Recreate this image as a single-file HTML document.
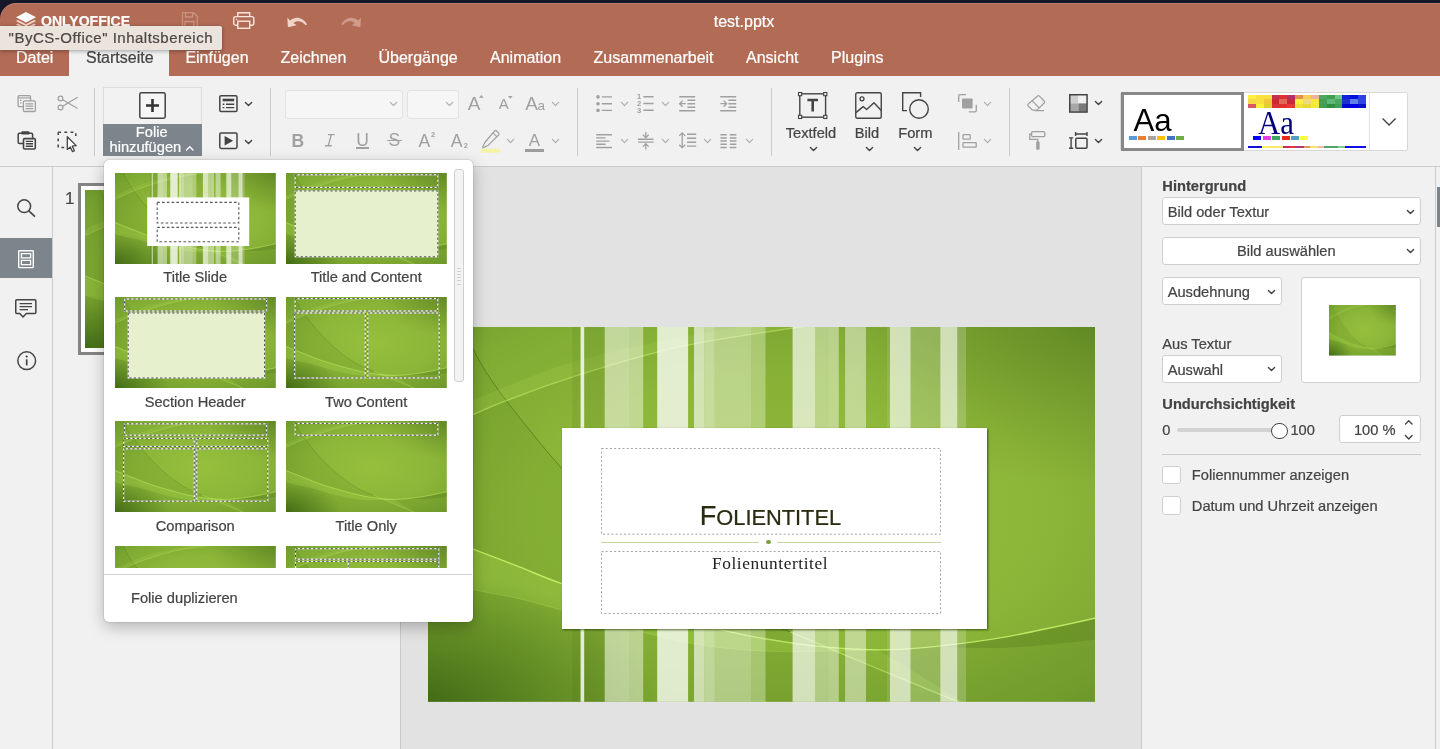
<!DOCTYPE html>
<html><head><meta charset="utf-8"><title>test.pptx</title>
<style>
html,body{margin:0;padding:0}
body{will-change:transform;width:1440px;height:749px;overflow:hidden;position:relative;background:#f1f1f1;font-family:"Liberation Sans",sans-serif;font-size:14.67px;color:#444}
.t{position:absolute;white-space:nowrap;-webkit-text-stroke:0.22px currentColor}
</style></head><body>
<div style="position:absolute;left:0px;top:0px;width:1440px;height:3px;background:#17172b"></div>
<div style="position:absolute;left:0px;top:0px;width:40px;height:40px;background:#17172b"></div>
<div style="position:absolute;left:0px;top:2.5px;width:1440px;height:73.5px;background:#b26b55;border-top-left-radius:16px;box-shadow:inset 0 1px 0 rgba(255,255,255,0.13)"></div>
<div style="position:absolute;left:69.2px;top:43px;width:99.6px;height:34px;background:#f1f1f1"></div>
<svg style="position:absolute;left:16px;top:12px;width:20px;height:18px;overflow:visible;" viewBox="0 0 20 18"><path d="M10,0 L20,5.2 L10,10.4 L0,5.2 Z" fill="#fff"/><path d="M1.8,8 L10,12.2 L18.2,8 L20,9.1 L10,14.3 L0,9.1 Z" fill="#f7d9cf"/><path d="M1.8,11.6 L10,15.8 L18.2,11.6 L20,12.7 L10,17.9 L0,12.7 Z" fill="#efc4b6"/></svg>
<div class="t" style="left:41px;top:12px;color:#fff;font-weight:bold;font-size:15px;line-height:18px;transform:scaleX(0.935);transform-origin:0 0">ONLYOFFICE</div>
<div class="t" style="left:0px;top:11.8px;color:#fff;font-size:16px;line-height:20px;width:1488px;text-align:center">test.pptx</div>
<svg style="position:absolute;left:181px;top:12px;width:17px;height:17px;overflow:visible;opacity:0.32" viewBox="0 0 17 17"><path d="M1.5,0.7 H12.5 L16.3,4.5 V16.3 H1.5 Z M4.5,0.7 V5 H11.5 V0.7 M4,16.3 V9.5 H13 V16.3" fill="none" stroke="#fbe6df" stroke-width="1.3"/></svg>
<svg style="position:absolute;left:232.5px;top:12px;width:21.5px;height:17px;overflow:visible;" viewBox="0 0 21.5 17"><path d="M4.8,4.6 V0.7 H16.7 V4.6" fill="none" stroke="#fbe6df" stroke-width="1.4"/><rect x="0.7" y="4.6" width="20.1" height="8.6" rx="2" fill="none" stroke="#fbe6df" stroke-width="1.4"/><rect x="4.8" y="9.2" width="11.9" height="7.1" fill="#b26b55" stroke="#fbe6df" stroke-width="1.4"/><circle cx="3.6" cy="7.3" r="0.8" fill="#fbe6df"/></svg>
<svg style="position:absolute;left:286.7px;top:17px;width:20.3px;height:10.4px;overflow:visible;opacity:0.85" viewBox="0 0 20.3 10.4"><path d="M0.3,0.8 L0.9,10.2 L9.6,8.2 L6.4,5.9 C10,3.2 15,3.6 18.6,8.2 L20,7.4 C16.2,0.6 8.6,-1.4 3.2,3.6 Z" fill="#fbe6df"/></svg>
<svg style="position:absolute;left:340.6px;top:17px;width:20.3px;height:10.4px;overflow:visible;opacity:0.4" viewBox="0 0 20.3 10.4"><path transform="translate(20.3 0) scale(-1 1)" d="M0.3,0.8 L0.9,10.2 L9.6,8.2 L6.4,5.9 C10,3.2 15,3.6 18.6,8.2 L20,7.4 C16.2,0.6 8.6,-1.4 3.2,3.6 Z" fill="#fbe6df"/></svg>
<div class="t" style="left:16px;top:48.1px;color:#fff;font-size:16px;line-height:20px">Datei</div>
<div class="t" style="left:86px;top:48.1px;color:#444;font-size:16px;line-height:20px">Startseite</div>
<div class="t" style="left:185.4px;top:48.1px;color:#fff;font-size:16px;line-height:20px">Einfügen</div>
<div class="t" style="left:280.5px;top:48.1px;color:#fff;font-size:16px;line-height:20px">Zeichnen</div>
<div class="t" style="left:378.5px;top:48.1px;color:#fff;font-size:16px;line-height:20px">Übergänge</div>
<div class="t" style="left:490px;top:48.1px;color:#fff;font-size:16px;line-height:20px">Animation</div>
<div class="t" style="left:593.5px;top:48.1px;color:#fff;font-size:16px;line-height:20px">Zusammenarbeit</div>
<div class="t" style="left:746px;top:48.1px;color:#fff;font-size:16px;line-height:20px">Ansicht</div>
<div class="t" style="left:831px;top:48.1px;color:#fff;font-size:16px;line-height:20px">Plugins</div>
<div style="position:absolute;left:0px;top:25.8px;width:221.7px;height:24.4px;background:#ebe4dc;box-shadow:0 1px 4px rgba(0,0,0,0.35);border-radius:0 2px 2px 0"></div>
<div class="t" style="left:8.6px;top:29.1px;color:#4b4845;font-size:15px;line-height:18px;letter-spacing:0.5px">&quot;ByCS-Office&quot; Inhaltsbereich</div>
<div style="position:absolute;left:0px;top:166px;width:1440px;height:1px;background:#cbcbcb"></div>
<div style="position:absolute;left:93.5px;top:88px;width:1px;height:68px;background:#cbcbcb"></div>
<div style="position:absolute;left:269.9px;top:88px;width:1px;height:68px;background:#cbcbcb"></div>
<div style="position:absolute;left:576.5px;top:88px;width:1px;height:68px;background:#cbcbcb"></div>
<div style="position:absolute;left:770.5px;top:88px;width:1px;height:68px;background:#cbcbcb"></div>
<div style="position:absolute;left:1008.9px;top:88px;width:1px;height:68px;background:#cbcbcb"></div>
<div style="position:absolute;left:52px;top:167px;width:1px;height:600px;background:#cbcbcb"></div>
<div style="position:absolute;left:0px;top:238px;width:52px;height:40px;background:#7d858c"></div>
<div style="position:absolute;left:401px;top:167px;width:740.5px;height:600px;background:#e2e2e2"></div>
<div style="position:absolute;left:400.3px;top:167px;width:1px;height:600px;background:#cbcbcb"></div>
<div style="position:absolute;left:1141px;top:167px;width:1px;height:600px;background:#cbcbcb"></div>
<div style="position:absolute;left:1435px;top:167px;width:1px;height:600px;background:#cbcbcb"></div>
<div style="position:absolute;left:1436.5px;top:187px;width:4px;height:40px;background:#7d858c"></div>
<div class="t" style="left:65px;top:189px;color:#444;font-size:17px;line-height:20px">1</div>
<div style="position:absolute;left:78px;top:183px;width:296px;height:171.5px;border:3.5px solid #848484;background:#fff;box-sizing:border-box"></div>
<svg style="position:absolute;left:84.7px;top:190px;width:282px;height:158px" viewBox="0 0 667 375" preserveAspectRatio="none">
<defs><radialGradient id="gg0" cx="54%" cy="50%" r="85%">
<stop offset="0" stop-color="#95bf3c"/><stop offset="0.45" stop-color="#8cb638"/><stop offset="0.75" stop-color="#7aa530"/><stop offset="1" stop-color="#5d8a24"/></radialGradient>
<radialGradient id="gd0" cx="0%" cy="100%" r="34%"><stop offset="0" stop-color="rgba(30,70,5,0.5)"/><stop offset="1" stop-color="rgba(30,70,5,0)"/></radialGradient>
<radialGradient id="gt0" cx="100%" cy="0%" r="42%"><stop offset="0" stop-color="rgba(40,70,10,0.26)"/><stop offset="1" stop-color="rgba(40,70,10,0)"/></radialGradient>
</defs>
<rect width="667" height="375" fill="url(#gg0)"/>
<path d="M30,-12 C30.8,-10.0 30.8,-8.7 35.0,0.0 C39.2,8.7 45.7,25.0 55.0,40.0 C64.3,55.0 75.0,70.0 91.0,90.0 C107.0,110.0 128.3,136.7 151.0,160.0 C173.7,183.3 201.8,210.0 227.0,230.0 C252.2,250.0 279.5,267.5 302.0,280.0 C324.5,292.5 338.2,295.0 362.0,305.0 C385.8,315.0 417.0,328.3 445.0,340.0 C473.0,351.7 513.3,368.2 530.0,375.0 C546.7,381.8 542.5,380.0 545.0,381.0 L-10,381 L-10,-12 Z" fill="rgba(50,90,10,0.085)"/>
<path d="M-10,113 C-8.3,112.2 -14.2,114.3 0.0,108.0 C14.2,101.7 49.8,85.0 75.0,75.0 C100.2,65.0 121.7,57.2 151.0,48.0 C180.3,38.8 217.5,27.5 251.0,20.0 C284.5,12.5 330.5,6.5 352.0,3.0 C373.5,-0.5 375.3,-0.3 380.0,-1.0 L-10,-12 Z" fill="rgba(190,235,100,0.07)"/>
<path d="M450,323 C458.9,322.5 482.4,322.2 503.7,320.0 C525.0,317.8 550.8,314.8 578.0,310.0 C605.2,305.2 650.0,295.1 667.0,291.4 C684.0,287.7 677.8,288.6 680.0,288.0 L680,381 L545,381 Z" fill="rgba(40,80,10,0.10)"/>
<path d="M-10,200 C-8.3,200.7 -9.1,200.3 0.0,204.0 C9.1,207.7 29.7,216.2 44.5,222.0 C59.3,227.8 74.2,233.2 89.0,239.0 C103.8,244.8 114.3,250.0 133.0,256.5 C151.7,263.0 172.8,269.9 201.0,278.0 C229.2,286.1 272.5,298.3 302.0,305.0 C331.5,311.7 353.3,315.0 378.0,318.0 C402.7,321.0 438.0,322.2 450.0,323.0 L450,323 C434.2,323.3 383.2,325.4 355.0,324.8 C326.8,324.2 303.6,322.4 280.7,319.3 C257.8,316.2 242.1,312.1 217.5,306.0 C192.9,299.9 154.4,288.8 133.0,283.0 C111.6,277.2 103.8,274.8 89.0,271.4 C74.2,268.0 59.3,266.1 44.5,262.5 C29.7,258.9 9.1,252.6 0.0,250.0 C-9.1,247.4 -8.3,247.5 -10.0,247.0 Z" fill="rgba(190,240,90,0.20)"/>
<rect width="667" height="375" fill="url(#gd0)"/>
<rect width="667" height="375" fill="url(#gt0)"/>
<path d="M30,-12 C30.8,-10.0 30.8,-8.7 35.0,0.0 C39.2,8.7 45.7,25.0 55.0,40.0 C64.3,55.0 75.0,70.0 91.0,90.0 C107.0,110.0 128.3,136.7 151.0,160.0 C173.7,183.3 201.8,210.0 227.0,230.0 C252.2,250.0 279.5,267.5 302.0,280.0 C324.5,292.5 352.0,300.8 362.0,305.0" stroke="rgba(55,95,15,0.5)" stroke-width="1.0" fill="none"/>
<path d="M362,305 C375.8,310.8 417.0,328.3 445.0,340.0 C473.0,351.7 513.3,368.2 530.0,375.0 C546.7,381.8 542.5,380.0 545.0,381.0" stroke="rgba(205,248,120,0.55)" stroke-width="1.2" fill="none"/>
<path d="M503.7,320 C516.1,318.3 550.8,314.8 578.0,310.0 C605.2,305.2 650.0,295.1 667.0,291.4 C684.0,287.7 677.8,288.6 680.0,288.0 L680,312 C677.8,312.2 677.0,312.0 667.0,313.0 C657.0,314.0 634.8,316.7 620.0,318.0 C605.2,319.3 591.3,320.5 578.0,321.0 C564.7,321.5 552.4,321.2 540.0,321.0 C527.6,320.8 509.8,320.2 503.7,320.0 Z" fill="rgba(40,70,10,0.14)"/>
<path d="M-10,113 C-8.3,112.2 -14.2,114.3 0.0,108.0 C14.2,101.7 49.8,85.0 75.0,75.0 C100.2,65.0 121.7,57.2 151.0,48.0 C180.3,38.8 217.5,27.5 251.0,20.0 C284.5,12.5 330.5,6.5 352.0,3.0 C373.5,-0.5 375.3,-0.3 380.0,-1.0 L384,-11 C379.3,-10.3 377.5,-10.5 356.0,-7.0 C334.5,-3.5 288.5,3.5 255.0,10.0 C221.5,16.5 184.3,23.8 155.0,32.0 C125.7,40.2 104.2,49.0 79.0,59.0 C53.8,69.0 18.2,85.7 4.0,92.0 C-10.2,98.3 -4.3,96.2 -6.0,97.0 Z" fill="rgba(205,245,110,0.10)"/>
<path d="M-10,113 C-8.3,112.2 -14.2,114.3 0.0,108.0 C14.2,101.7 49.8,85.0 75.0,75.0 C100.2,65.0 121.7,57.2 151.0,48.0 C180.3,38.8 217.5,27.5 251.0,20.0 C284.5,12.5 330.5,6.5 352.0,3.0 C373.5,-0.5 375.3,-0.3 380.0,-1.0" stroke="rgba(205,245,110,0.5)" stroke-width="1.3" fill="none"/>
<path d="M-10,247 C-8.3,247.5 -9.1,247.4 0.0,250.0 C9.1,252.6 29.7,258.9 44.5,262.5 C59.3,266.1 74.2,268.0 89.0,271.4 C103.8,274.8 111.6,277.2 133.0,283.0 C154.4,288.8 192.9,299.9 217.5,306.0 C242.1,312.1 257.8,316.2 280.7,319.3 C303.6,322.4 326.8,324.2 355.0,324.8 C383.2,325.4 434.2,323.3 450.0,323.0" stroke="rgba(200,245,110,0.22)" stroke-width="1.0" fill="none"/>
<path d="M-10,200 C-8.3,200.7 -9.1,200.3 0.0,204.0 C9.1,207.7 29.7,216.2 44.5,222.0 C59.3,227.8 74.2,233.2 89.0,239.0 C103.8,244.8 114.3,250.0 133.0,256.5 C151.7,263.0 172.8,269.9 201.0,278.0 C229.2,286.1 272.5,298.3 302.0,305.0 C331.5,311.7 353.3,315.0 378.0,318.0 C402.7,321.0 429.1,322.7 450.0,323.0 C470.9,323.3 482.4,322.2 503.7,320.0 C525.0,317.8 550.8,314.8 578.0,310.0 C605.2,305.2 650.0,295.1 667.0,291.4 C684.0,287.7 677.8,288.6 680.0,288.0" stroke="rgba(205,248,110,0.8)" stroke-width="1.4" fill="none"/>
<rect x="144.2" y="0" width="8.2" height="375" fill="rgba(0,0,0,0.05)"/><rect x="152.6" y="0" width="3.6" height="375" fill="rgba(255,255,255,0.8)"/><rect x="156.2" y="0" width="20.5" height="375" fill="rgba(0,0,0,0.05)"/><rect x="176.7" y="0" width="25.1" height="375" fill="rgba(255,255,255,0.5)"/><rect x="201.8" y="0" width="13.4" height="375" fill="rgba(255,255,255,0.45)"/><rect x="229.2" y="0" width="30.9" height="375" fill="rgba(255,255,255,0.76)"/><rect x="266" y="0" width="10.1" height="375" fill="rgba(255,255,255,0.62)"/><rect x="276.1" y="0" width="10.7" height="375" fill="rgba(255,255,255,0.5)"/><rect x="286.8" y="0" width="36.2" height="375" fill="rgba(255,255,255,0.4)"/><rect x="323" y="0" width="14.5" height="375" fill="rgba(255,255,255,0.3)"/><rect x="337.5" y="0" width="27.1" height="375" fill="rgba(0,0,0,0.03)"/><rect x="364.6" y="0" width="22.6" height="375" fill="rgba(255,255,255,0.66)"/><rect x="387.2" y="0" width="12.2" height="375" fill="rgba(255,255,255,0.4)"/><rect x="399.4" y="0" width="11.4" height="375" fill="rgba(255,255,255,0.43)"/><rect x="417.1" y="0" width="20.9" height="375" fill="rgba(255,255,255,0.45)"/><rect x="459" y="0" width="3" height="375" fill="rgba(255,255,255,0.1)"/><rect x="462" y="0" width="20.6" height="375" fill="rgba(255,255,255,0.66)"/><rect x="482.6" y="0" width="29.7" height="375" fill="rgba(255,255,255,0.2)"/><rect x="512.3" y="0" width="17.0" height="375" fill="rgba(255,255,255,0.66)"/><rect x="529.3" y="0" width="8.8" height="375" fill="rgba(255,255,255,0.2)"/><rect x="133.6" y="101" width="425.6" height="200.6" fill="#fff"/></svg>
<svg style="position:absolute;left:428px;top:327.2px;width:667px;height:374.8px" viewBox="0 0 667 375" preserveAspectRatio="none">
<defs><radialGradient id="gg1" cx="54%" cy="50%" r="85%">
<stop offset="0" stop-color="#95bf3c"/><stop offset="0.45" stop-color="#8cb638"/><stop offset="0.75" stop-color="#7aa530"/><stop offset="1" stop-color="#5d8a24"/></radialGradient>
<radialGradient id="gd1" cx="0%" cy="100%" r="34%"><stop offset="0" stop-color="rgba(30,70,5,0.5)"/><stop offset="1" stop-color="rgba(30,70,5,0)"/></radialGradient>
<radialGradient id="gt1" cx="100%" cy="0%" r="42%"><stop offset="0" stop-color="rgba(40,70,10,0.26)"/><stop offset="1" stop-color="rgba(40,70,10,0)"/></radialGradient>
</defs>
<rect width="667" height="375" fill="url(#gg1)"/>
<path d="M30,-12 C30.8,-10.0 30.8,-8.7 35.0,0.0 C39.2,8.7 45.7,25.0 55.0,40.0 C64.3,55.0 75.0,70.0 91.0,90.0 C107.0,110.0 128.3,136.7 151.0,160.0 C173.7,183.3 201.8,210.0 227.0,230.0 C252.2,250.0 279.5,267.5 302.0,280.0 C324.5,292.5 338.2,295.0 362.0,305.0 C385.8,315.0 417.0,328.3 445.0,340.0 C473.0,351.7 513.3,368.2 530.0,375.0 C546.7,381.8 542.5,380.0 545.0,381.0 L-10,381 L-10,-12 Z" fill="rgba(50,90,10,0.085)"/>
<path d="M-10,113 C-8.3,112.2 -14.2,114.3 0.0,108.0 C14.2,101.7 49.8,85.0 75.0,75.0 C100.2,65.0 121.7,57.2 151.0,48.0 C180.3,38.8 217.5,27.5 251.0,20.0 C284.5,12.5 330.5,6.5 352.0,3.0 C373.5,-0.5 375.3,-0.3 380.0,-1.0 L-10,-12 Z" fill="rgba(190,235,100,0.07)"/>
<path d="M450,323 C458.9,322.5 482.4,322.2 503.7,320.0 C525.0,317.8 550.8,314.8 578.0,310.0 C605.2,305.2 650.0,295.1 667.0,291.4 C684.0,287.7 677.8,288.6 680.0,288.0 L680,381 L545,381 Z" fill="rgba(40,80,10,0.10)"/>
<path d="M-10,200 C-8.3,200.7 -9.1,200.3 0.0,204.0 C9.1,207.7 29.7,216.2 44.5,222.0 C59.3,227.8 74.2,233.2 89.0,239.0 C103.8,244.8 114.3,250.0 133.0,256.5 C151.7,263.0 172.8,269.9 201.0,278.0 C229.2,286.1 272.5,298.3 302.0,305.0 C331.5,311.7 353.3,315.0 378.0,318.0 C402.7,321.0 438.0,322.2 450.0,323.0 L450,323 C434.2,323.3 383.2,325.4 355.0,324.8 C326.8,324.2 303.6,322.4 280.7,319.3 C257.8,316.2 242.1,312.1 217.5,306.0 C192.9,299.9 154.4,288.8 133.0,283.0 C111.6,277.2 103.8,274.8 89.0,271.4 C74.2,268.0 59.3,266.1 44.5,262.5 C29.7,258.9 9.1,252.6 0.0,250.0 C-9.1,247.4 -8.3,247.5 -10.0,247.0 Z" fill="rgba(190,240,90,0.20)"/>
<rect width="667" height="375" fill="url(#gd1)"/>
<rect width="667" height="375" fill="url(#gt1)"/>
<path d="M30,-12 C30.8,-10.0 30.8,-8.7 35.0,0.0 C39.2,8.7 45.7,25.0 55.0,40.0 C64.3,55.0 75.0,70.0 91.0,90.0 C107.0,110.0 128.3,136.7 151.0,160.0 C173.7,183.3 201.8,210.0 227.0,230.0 C252.2,250.0 279.5,267.5 302.0,280.0 C324.5,292.5 352.0,300.8 362.0,305.0" stroke="rgba(55,95,15,0.5)" stroke-width="1.0" fill="none"/>
<path d="M362,305 C375.8,310.8 417.0,328.3 445.0,340.0 C473.0,351.7 513.3,368.2 530.0,375.0 C546.7,381.8 542.5,380.0 545.0,381.0" stroke="rgba(205,248,120,0.55)" stroke-width="1.2" fill="none"/>
<path d="M503.7,320 C516.1,318.3 550.8,314.8 578.0,310.0 C605.2,305.2 650.0,295.1 667.0,291.4 C684.0,287.7 677.8,288.6 680.0,288.0 L680,312 C677.8,312.2 677.0,312.0 667.0,313.0 C657.0,314.0 634.8,316.7 620.0,318.0 C605.2,319.3 591.3,320.5 578.0,321.0 C564.7,321.5 552.4,321.2 540.0,321.0 C527.6,320.8 509.8,320.2 503.7,320.0 Z" fill="rgba(40,70,10,0.14)"/>
<path d="M-10,113 C-8.3,112.2 -14.2,114.3 0.0,108.0 C14.2,101.7 49.8,85.0 75.0,75.0 C100.2,65.0 121.7,57.2 151.0,48.0 C180.3,38.8 217.5,27.5 251.0,20.0 C284.5,12.5 330.5,6.5 352.0,3.0 C373.5,-0.5 375.3,-0.3 380.0,-1.0 L384,-11 C379.3,-10.3 377.5,-10.5 356.0,-7.0 C334.5,-3.5 288.5,3.5 255.0,10.0 C221.5,16.5 184.3,23.8 155.0,32.0 C125.7,40.2 104.2,49.0 79.0,59.0 C53.8,69.0 18.2,85.7 4.0,92.0 C-10.2,98.3 -4.3,96.2 -6.0,97.0 Z" fill="rgba(205,245,110,0.10)"/>
<path d="M-10,113 C-8.3,112.2 -14.2,114.3 0.0,108.0 C14.2,101.7 49.8,85.0 75.0,75.0 C100.2,65.0 121.7,57.2 151.0,48.0 C180.3,38.8 217.5,27.5 251.0,20.0 C284.5,12.5 330.5,6.5 352.0,3.0 C373.5,-0.5 375.3,-0.3 380.0,-1.0" stroke="rgba(205,245,110,0.5)" stroke-width="1.3" fill="none"/>
<path d="M-10,247 C-8.3,247.5 -9.1,247.4 0.0,250.0 C9.1,252.6 29.7,258.9 44.5,262.5 C59.3,266.1 74.2,268.0 89.0,271.4 C103.8,274.8 111.6,277.2 133.0,283.0 C154.4,288.8 192.9,299.9 217.5,306.0 C242.1,312.1 257.8,316.2 280.7,319.3 C303.6,322.4 326.8,324.2 355.0,324.8 C383.2,325.4 434.2,323.3 450.0,323.0" stroke="rgba(200,245,110,0.22)" stroke-width="1.0" fill="none"/>
<path d="M-10,200 C-8.3,200.7 -9.1,200.3 0.0,204.0 C9.1,207.7 29.7,216.2 44.5,222.0 C59.3,227.8 74.2,233.2 89.0,239.0 C103.8,244.8 114.3,250.0 133.0,256.5 C151.7,263.0 172.8,269.9 201.0,278.0 C229.2,286.1 272.5,298.3 302.0,305.0 C331.5,311.7 353.3,315.0 378.0,318.0 C402.7,321.0 429.1,322.7 450.0,323.0 C470.9,323.3 482.4,322.2 503.7,320.0 C525.0,317.8 550.8,314.8 578.0,310.0 C605.2,305.2 650.0,295.1 667.0,291.4 C684.0,287.7 677.8,288.6 680.0,288.0" stroke="rgba(205,248,110,0.8)" stroke-width="1.4" fill="none"/>
<rect x="144.2" y="0" width="8.2" height="375" fill="rgba(0,0,0,0.05)"/><rect x="152.6" y="0" width="3.6" height="375" fill="rgba(255,255,255,0.8)"/><rect x="156.2" y="0" width="20.5" height="375" fill="rgba(0,0,0,0.05)"/><rect x="176.7" y="0" width="25.1" height="375" fill="rgba(255,255,255,0.5)"/><rect x="201.8" y="0" width="13.4" height="375" fill="rgba(255,255,255,0.45)"/><rect x="229.2" y="0" width="30.9" height="375" fill="rgba(255,255,255,0.76)"/><rect x="266" y="0" width="10.1" height="375" fill="rgba(255,255,255,0.62)"/><rect x="276.1" y="0" width="10.7" height="375" fill="rgba(255,255,255,0.5)"/><rect x="286.8" y="0" width="36.2" height="375" fill="rgba(255,255,255,0.4)"/><rect x="323" y="0" width="14.5" height="375" fill="rgba(255,255,255,0.3)"/><rect x="337.5" y="0" width="27.1" height="375" fill="rgba(0,0,0,0.03)"/><rect x="364.6" y="0" width="22.6" height="375" fill="rgba(255,255,255,0.66)"/><rect x="387.2" y="0" width="12.2" height="375" fill="rgba(255,255,255,0.4)"/><rect x="399.4" y="0" width="11.4" height="375" fill="rgba(255,255,255,0.43)"/><rect x="417.1" y="0" width="20.9" height="375" fill="rgba(255,255,255,0.45)"/><rect x="459" y="0" width="3" height="375" fill="rgba(255,255,255,0.1)"/><rect x="462" y="0" width="20.6" height="375" fill="rgba(255,255,255,0.66)"/><rect x="482.6" y="0" width="29.7" height="375" fill="rgba(255,255,255,0.2)"/><rect x="512.3" y="0" width="17.0" height="375" fill="rgba(255,255,255,0.66)"/><rect x="529.3" y="0" width="8.8" height="375" fill="rgba(255,255,255,0.2)"/></svg>
<div style="position:absolute;left:561.6px;top:428px;width:425.6px;height:200.6px;background:#fff;box-shadow:1px 1px 2px rgba(30,50,0,0.7)"></div>
<svg style="position:absolute;left:601.4px;top:447.8px;width:340px;height:86.7px;overflow:visible;" viewBox="0 0 340 86.7"><rect x="0.5" y="0.5" width="339" height="85.7" fill="none" stroke="#a4a4a4" stroke-width="1" stroke-dasharray="2 2.2"/></svg>
<svg style="position:absolute;left:601.4px;top:551px;width:340px;height:63px;overflow:visible;" viewBox="0 0 340 63"><rect x="0.5" y="0.5" width="339" height="62" fill="none" stroke="#a4a4a4" stroke-width="1" stroke-dasharray="2 2.2"/></svg>
<div style="position:absolute;left:601.4px;top:541.7px;width:157.3px;height:1px;background:#c6d4a2"></div>
<div style="position:absolute;left:777.2px;top:541.7px;width:164px;height:1px;background:#c6d4a2"></div>
<div style="position:absolute;left:765.6px;top:539.7px;width:5.4px;height:4.6px;background:#7c9c3c;border-radius:50%"></div>
<div class="t" style="left:600.4px;top:498.5px;color:#2b2b12;font-size:27.2px;line-height:34px;width:340px;text-align:center">F<span style="font-size:21.8px;text-transform:uppercase">olientitel</span></div>
<div class="t" style="left:600.1px;top:553.2px;-webkit-text-stroke:0;color:#222;font-size:17.3px;line-height:22px;width:340px;text-align:center;font-family:'Liberation Serif',serif;letter-spacing:0.6px">Folienuntertitel</div>
<svg style="position:absolute;left:16px;top:94px;width:22px;height:20px;overflow:visible;" viewBox="16 94 22 20"><rect x="18.1" y="95.6" width="12.4" height="11" rx="1.2" fill="none" stroke="#a0a0a0" stroke-width="1.3"/><path d="M18.1,97.9 H30.5" stroke="#a0a0a0" stroke-width="1.1"/><path d="M20,100.4 H21.6 M20,103 H21.6" stroke="#a0a0a0" stroke-width="1.1"/><rect x="23.4" y="100.9" width="12" height="10.6" rx="1.2" fill="#f1f1f1" stroke="#a0a0a0" stroke-width="1.3"/><path d="M25.6,103.8 H33.2 M25.6,106.2 H33.2 M25.6,108.6 H33.2" stroke="#a0a0a0" stroke-width="1.2"/></svg>
<svg style="position:absolute;left:56px;top:94px;width:24px;height:20px;overflow:visible;" viewBox="56 94 24 20"><circle cx="60.5" cy="98.5" r="2.4" fill="none" stroke="#a0a0a0" stroke-width="1.2"/><circle cx="60.5" cy="107.5" r="2.4" fill="none" stroke="#a0a0a0" stroke-width="1.2"/><path d="M62.6,99.8 L77.6,108.6 M62.6,106.2 L77.6,97.2" stroke="#a0a0a0" stroke-width="1.2" fill="none"/></svg>
<svg style="position:absolute;left:16px;top:130px;width:22px;height:21px;overflow:visible;" viewBox="16 130 22 21"><path d="M23,143.4 H19.4 Q18.2,143.4 18.2,142.2 V134.4 Q18.2,133.2 19.4,133.2 H31.4 Q32.6,133.2 32.6,134.4 V138" fill="none" stroke="#444" stroke-width="1.5"/><rect x="21.4" y="131.2" width="8" height="3.4" rx="1" fill="#444"/><rect x="23.5" y="138.6" width="11.8" height="10.4" rx="1.2" fill="#f1f1f1" stroke="#444" stroke-width="1.6"/><path d="M25.8,141.4 H33 M25.8,143.8 H33 M25.8,146.2 H33" stroke="#444" stroke-width="1.4"/></svg>
<svg style="position:absolute;left:56px;top:130px;width:24px;height:24px;overflow:visible;" viewBox="56 130 24 24"><path d="M58.2,132.2 H75.8 V139 M58.2,132.2 V147.6 H64.5" fill="none" stroke="#444" stroke-width="1.5" stroke-dasharray="2.8 3.4"/><path d="M67.3,136.8 L67.3,149.4 L70.3,146.9 L72.4,151.6 L74.4,150.7 L72.3,146.2 L76.2,145.6 Z" fill="#fff" stroke="#444" stroke-width="1.3" stroke-linejoin="round"/></svg>
<div style="position:absolute;left:103px;top:87px;width:98.6px;height:37.5px;background:#f2f2f2;border:1px solid #dcdcdc;border-bottom:none;box-sizing:border-box"></div>
<div style="position:absolute;left:103px;top:124.4px;width:98.6px;height:31.4px;background:#7d858c"></div>
<svg style="position:absolute;left:139px;top:92.4px;width:27px;height:27px;overflow:visible;" viewBox="0 0 27 27"><rect x="0.8" y="0.8" width="25.4" height="25.4" rx="1.6" fill="#f6f6f6" stroke="#444" stroke-width="1.5"/><path d="M13.5,7 V20 M7,13.5 H20" stroke="#333" stroke-width="2.6"/></svg>
<div class="t" style="left:102.4px;top:125.2px;color:#fff;width:98.6px;text-align:center;line-height:15px">Folie</div>
<div class="t" style="left:109.5px;top:140.4px;color:#fff;line-height:15px">hinzufügen</div>
<svg style="position:absolute;left:186px;top:146.2px;width:7.5px;height:4.4px;overflow:visible;" viewBox="0 0 7.5 4.4"><path d="M0.5,4 L3.75,0.7 L7,4" fill="none" stroke="#fff" stroke-width="1.4" stroke-linecap="round" stroke-linejoin="round"/></svg>
<svg style="position:absolute;left:219.4px;top:95px;width:18.8px;height:17.4px;overflow:visible;" viewBox="0 0 18.8 17.4"><rect x="0.8" y="0.8" width="17.2" height="15.8" rx="1.3" fill="none" stroke="#444" stroke-width="1.5"/><rect x="3.6" y="3.7" width="11.6" height="2.6" fill="#444"/><path d="M3.6,9.3 H5.4 M7,9.3 H15.2 M3.6,12.6 H5.4 M7,12.6 H15.2" stroke="#444" stroke-width="1.4"/></svg>
<svg style="position:absolute;left:245px;top:102px;width:7px;height:4px;overflow:visible;" viewBox="0 0 7 4"><path d="M0.4,0.4 L3.5,3.6 L6.6,0.4" fill="none" stroke="#444" stroke-width="1.4" stroke-linecap="round" stroke-linejoin="round"/></svg>
<svg style="position:absolute;left:219.4px;top:132.2px;width:18.8px;height:17.4px;overflow:visible;" viewBox="0 0 18.8 17"><rect x="0.8" y="0.8" width="17.2" height="15.4" rx="1.3" fill="none" stroke="#444" stroke-width="1.5"/><path d="M5.6,3.8 L14.2,8.5 L5.6,13.2 Z" fill="#444"/></svg>
<svg style="position:absolute;left:245px;top:139.5px;width:7px;height:4px;overflow:visible;" viewBox="0 0 7 4"><path d="M0.4,0.4 L3.5,3.6 L6.6,0.4" fill="none" stroke="#444" stroke-width="1.4" stroke-linecap="round" stroke-linejoin="round"/></svg>
<div style="position:absolute;left:285.4px;top:90.3px;width:117.8px;height:28.5px;background:#f6f6f6;border:1px solid #e2e2e2;border-radius:3px;box-sizing:border-box"></div>
<div style="position:absolute;left:407px;top:90.3px;width:52.2px;height:28.5px;background:#f6f6f6;border:1px solid #e2e2e2;border-radius:3px;box-sizing:border-box"></div>
<svg style="position:absolute;left:389.6px;top:101.7px;width:7px;height:4px;overflow:visible;" viewBox="0 0 7 4"><path d="M0.4,0.4 L3.5,3.6 L6.6,0.4" fill="none" stroke="#adadad" stroke-width="1.2" stroke-linecap="round" stroke-linejoin="round"/></svg>
<svg style="position:absolute;left:445.6px;top:101.7px;width:7px;height:4px;overflow:visible;" viewBox="0 0 7 4"><path d="M0.4,0.4 L3.5,3.6 L6.6,0.4" fill="none" stroke="#adadad" stroke-width="1.2" stroke-linecap="round" stroke-linejoin="round"/></svg>
<div class="t" style="left:467.8px;top:93.5px;-webkit-text-stroke:0;color:#a0a0a0;font-size:19px;line-height:20px">A</div>
<svg style="position:absolute;left:478.6px;top:94.9px;width:4.6px;height:2.7px;overflow:visible;" viewBox="0 0 4.6 2.7"><path d="M0,2.7 L2.3,0 L4.6,2.7 Z" fill="#a0a0a0"/></svg>
<div class="t" style="left:498.8px;top:96.4px;-webkit-text-stroke:0;color:#a0a0a0;font-size:15px;line-height:16px">A</div>
<svg style="position:absolute;left:508.3px;top:96.2px;width:4.6px;height:2.7px;overflow:visible;" viewBox="0 0 4.6 2.7"><path d="M0,0 L2.3,2.7 L4.6,0 Z" fill="#a0a0a0"/></svg>
<div class="t" style="left:525.3px;top:93.5px;-webkit-text-stroke:0;color:#a0a0a0;font-size:19px;line-height:20px">A</div>
<div class="t" style="left:537.6px;top:97.6px;-webkit-text-stroke:0;color:#a0a0a0;font-size:13.5px;line-height:15px">a</div>
<svg style="position:absolute;left:551.6px;top:102.2px;width:7px;height:4px;overflow:visible;" viewBox="0 0 7 4"><path d="M0.4,0.4 L3.5,3.6 L6.6,0.4" fill="none" stroke="#adadad" stroke-width="1.2" stroke-linecap="round" stroke-linejoin="round"/></svg>
<div class="t" style="left:291.5px;top:131px;-webkit-text-stroke:0;color:#a0a0a0;font-size:17.5px;line-height:20px;font-weight:bold">B</div>
<svg style="position:absolute;left:324.6px;top:134.2px;width:9.6px;height:12.4px;overflow:visible;" viewBox="0 0 9.6 12.4"><path d="M3,0.65 H9.6 M0,11.75 H6.8 M6.3,0.65 L3.3,11.75" stroke="#a0a0a0" stroke-width="1.3" fill="none"/></svg>
<div class="t" style="left:356.2px;top:129.6px;-webkit-text-stroke:0;color:#a0a0a0;font-size:17.5px;line-height:20px">U</div>
<div style="position:absolute;left:356px;top:147.4px;width:13px;height:1.3px;background:#a0a0a0"></div>
<div class="t" style="left:388.4px;top:129.8px;-webkit-text-stroke:0;color:#a0a0a0;font-size:17.5px;line-height:20px">S</div>
<div style="position:absolute;left:386.6px;top:140.2px;width:15.6px;height:1.3px;background:#a0a0a0"></div>
<div class="t" style="left:418.6px;top:131.2px;-webkit-text-stroke:0;color:#a0a0a0;font-size:17.6px;line-height:20px">A</div>
<div class="t" style="left:431px;top:130.6px;-webkit-text-stroke:0;color:#a0a0a0;font-size:7.5px;line-height:8px;font-weight:bold">2</div>
<div class="t" style="left:450.8px;top:131.2px;-webkit-text-stroke:0;color:#a0a0a0;font-size:17.6px;line-height:20px">A</div>
<div class="t" style="left:463.8px;top:142.2px;-webkit-text-stroke:0;color:#a0a0a0;font-size:7.5px;line-height:8px;font-weight:bold">2</div>
<svg style="position:absolute;left:481px;top:129.6px;width:19px;height:23px;overflow:visible;" viewBox="0 0 19 23"><path d="M13.6,1 Q14.6,0 15.6,1 L17.6,3 Q18.6,4 17.6,5 L7.4,15.2 L2.6,17.6 L1.8,16.8 L4.2,12 Z M12,2.8 L15.8,6.6" fill="none" stroke="#a0a0a0" stroke-width="1.2" stroke-linejoin="round"/><path d="M1.6,17 L3.4,17.8 L1,18.6Z" fill="#a0a0a0"/><rect x="0" y="18.8" width="19" height="3.9" fill="#f4f4a4"/></svg>
<svg style="position:absolute;left:507px;top:138.9px;width:7px;height:4px;overflow:visible;" viewBox="0 0 7 4"><path d="M0.4,0.4 L3.5,3.6 L6.6,0.4" fill="none" stroke="#adadad" stroke-width="1.2" stroke-linecap="round" stroke-linejoin="round"/></svg>
<div class="t" style="left:528.8px;top:131px;-webkit-text-stroke:0;color:#a0a0a0;font-size:17px;line-height:20px">A</div>
<div style="position:absolute;left:525.4px;top:148.7px;width:18.7px;height:3.7px;background:#9c9c9c"></div>
<svg style="position:absolute;left:551.6px;top:138.9px;width:7px;height:4px;overflow:visible;" viewBox="0 0 7 4"><path d="M0.4,0.4 L3.5,3.6 L6.6,0.4" fill="none" stroke="#adadad" stroke-width="1.2" stroke-linecap="round" stroke-linejoin="round"/></svg>
<svg style="position:absolute;left:596px;top:95px;width:16.8px;height:17px;overflow:visible;" viewBox="0 0 16.8 17"><circle cx="2" cy="1.9" r="1.8" fill="#a0a0a0"/><circle cx="2" cy="8.7" r="1.8" fill="#a0a0a0"/><circle cx="2" cy="15.4" r="1.8" fill="#a0a0a0"/><path d="M5.8,1.9 H16 M5.8,8.7 H16 M5.8,15.4 H16" stroke="#a0a0a0" stroke-width="1.4"/></svg>
<svg style="position:absolute;left:621px;top:101.7px;width:7px;height:4px;overflow:visible;" viewBox="0 0 7 4"><path d="M0.4,0.4 L3.5,3.6 L6.6,0.4" fill="none" stroke="#adadad" stroke-width="1.2" stroke-linecap="round" stroke-linejoin="round"/></svg>
<svg style="position:absolute;left:637.2px;top:93.2px;width:16.6px;height:19px;overflow:visible;" viewBox="0 0 16.6 19"><path d="M6.4,3.7 H16.6 M6.4,10.5 H16.6 M6.4,17.2 H16.6" stroke="#a0a0a0" stroke-width="1.4"/><text x="0" y="6.2" font-size="7.6" font-weight="bold" fill="#a0a0a0" font-family="Liberation Sans, sans-serif">1</text><text x="0" y="13" font-size="7.6" font-weight="bold" fill="#a0a0a0" font-family="Liberation Sans, sans-serif">2</text><text x="0" y="19.7" font-size="7.6" font-weight="bold" fill="#a0a0a0" font-family="Liberation Sans, sans-serif">3</text></svg>
<svg style="position:absolute;left:662.4px;top:101.7px;width:7px;height:4px;overflow:visible;" viewBox="0 0 7 4"><path d="M0.4,0.4 L3.5,3.6 L6.6,0.4" fill="none" stroke="#adadad" stroke-width="1.2" stroke-linecap="round" stroke-linejoin="round"/></svg>
<svg style="position:absolute;left:679px;top:95.6px;width:16.6px;height:15.6px;overflow:visible;" viewBox="0 0 16.6 15.6"><path d="M0.2,0.7 H16.2 M8.4,4.2 H16.2 M8.4,7.7 H16.2 M8.4,11.2 H16.2 M0.2,14.7 H16.2" stroke="#a0a0a0" stroke-width="1.4"/><path d="M6.8,7.7 H0.8 M3.6,4.6 L0.6,7.7 L3.6,10.8" fill="none" stroke="#a0a0a0" stroke-width="1.3"/></svg>
<svg style="position:absolute;left:720.4px;top:95.6px;width:16.6px;height:15.6px;overflow:visible;" viewBox="0 0 16.6 15.6"><path d="M0.2,0.7 H16.2 M8.4,4.2 H16.2 M8.4,7.7 H16.2 M8.4,11.2 H16.2 M0.2,14.7 H16.2" stroke="#a0a0a0" stroke-width="1.4"/><path d="M0.4,7.7 H6.4 M3.6,4.6 L6.6,7.7 L3.6,10.8" fill="none" stroke="#a0a0a0" stroke-width="1.3"/></svg>
<svg style="position:absolute;left:596px;top:133.7px;width:16.8px;height:15px;overflow:visible;" viewBox="0 0 16.8 15"><path d="M0.2,0.7 H16 M0.2,3.9 H9.6 M0.2,7.1 H13.4 M0.2,10.3 H9.6 M0.2,13.5 H16" stroke="#a0a0a0" stroke-width="1.4"/></svg>
<svg style="position:absolute;left:621px;top:138.9px;width:7px;height:4px;overflow:visible;" viewBox="0 0 7 4"><path d="M0.4,0.4 L3.5,3.6 L6.6,0.4" fill="none" stroke="#adadad" stroke-width="1.2" stroke-linecap="round" stroke-linejoin="round"/></svg>
<svg style="position:absolute;left:637.6px;top:132.4px;width:15.6px;height:17.4px;overflow:visible;" viewBox="0 0 15.6 17.4"><path d="M0,7.3 H15.6 M0,10.1 H15.6" stroke="#a0a0a0" stroke-width="1.4"/><path d="M7.8,0 V5.6 M4.9,2.8 L7.8,5.7 L10.7,2.8 M7.8,17.4 V11.8 M4.9,14.6 L7.8,11.7 L10.7,14.6" fill="none" stroke="#a0a0a0" stroke-width="1.3"/></svg>
<svg style="position:absolute;left:662.4px;top:138.9px;width:7px;height:4px;overflow:visible;" viewBox="0 0 7 4"><path d="M0.4,0.4 L3.5,3.6 L6.6,0.4" fill="none" stroke="#adadad" stroke-width="1.2" stroke-linecap="round" stroke-linejoin="round"/></svg>
<svg style="position:absolute;left:678.4px;top:132.4px;width:18.6px;height:17.4px;overflow:visible;" viewBox="0 0 18.6 17.4"><path d="M9,2.3 H18.2 M9,6.3 H18.2 M9,10.2 H18.2 M9,14.1 H18.2" stroke="#a0a0a0" stroke-width="1.4"/><path d="M4.2,0.9 V15.7 M1.2,3.9 L4.2,0.9 L7.2,3.9 M1.2,12.7 L4.2,15.7 L7.2,12.7" fill="none" stroke="#a0a0a0" stroke-width="1.3"/></svg>
<svg style="position:absolute;left:704px;top:138.9px;width:7px;height:4px;overflow:visible;" viewBox="0 0 7 4"><path d="M0.4,0.4 L3.5,3.6 L6.6,0.4" fill="none" stroke="#adadad" stroke-width="1.2" stroke-linecap="round" stroke-linejoin="round"/></svg>
<svg style="position:absolute;left:720.4px;top:133.9px;width:16.6px;height:15px;overflow:visible;" viewBox="0 0 16.6 15"><path d="M0.4,0.7 H6.8 M0.4,3.9 H6.8 M0.4,7.1 H6.8 M0.4,10.3 H6.8 M0.4,13.5 H6.8 M9.8,0.7 H16.4 M9.8,3.9 H16.4 M9.8,7.1 H16.4 M9.8,10.3 H16.4 M9.8,13.5 H16.4" stroke="#a0a0a0" stroke-width="1.5"/></svg>
<svg style="position:absolute;left:745.6px;top:138.9px;width:7px;height:4px;overflow:visible;" viewBox="0 0 7 4"><path d="M0.4,0.4 L3.5,3.6 L6.6,0.4" fill="none" stroke="#adadad" stroke-width="1.2" stroke-linecap="round" stroke-linejoin="round"/></svg>
<svg style="position:absolute;left:797.6px;top:92.4px;width:29.4px;height:27px;overflow:visible;" viewBox="0 0 29.4 27"><rect x="1.8" y="1.8" width="25.8" height="23.4" fill="none" stroke="#444" stroke-width="1.4"/><rect x="0.5" y="0.5" width="3.2" height="3.2" fill="#f1f1f1" stroke="#444" stroke-width="1.1"/><rect x="25.7" y="0.5" width="3.2" height="3.2" fill="#f1f1f1" stroke="#444" stroke-width="1.1"/><rect x="0.5" y="23.3" width="3.2" height="3.2" fill="#f1f1f1" stroke="#444" stroke-width="1.1"/><rect x="25.7" y="23.3" width="3.2" height="3.2" fill="#f1f1f1" stroke="#444" stroke-width="1.1"/><path d="M9.4,8 H20 M14.7,8 V19.6" stroke="#444" stroke-width="2.6" fill="none"/></svg>
<div class="t" style="left:771px;top:124.5px;width:80px;text-align:center;line-height:16px">Textfeld</div>
<svg style="position:absolute;left:810px;top:147.4px;width:7px;height:4px;overflow:visible;" viewBox="0 0 7 4"><path d="M0.4,0.4 L3.5,3.6 L6.6,0.4" fill="none" stroke="#444" stroke-width="1.4" stroke-linecap="round" stroke-linejoin="round"/></svg>
<svg style="position:absolute;left:855px;top:92.4px;width:27px;height:27px;overflow:visible;" viewBox="0 0 27 27"><rect x="0.75" y="0.75" width="25.5" height="25.5" rx="1.5" fill="none" stroke="#444" stroke-width="1.4"/><circle cx="7" cy="6.8" r="2" fill="none" stroke="#444" stroke-width="1.3"/><path d="M0.9,20.6 L8.2,14.6 L11.6,17.6 L19,10.8 L26.2,18.4" fill="none" stroke="#444" stroke-width="1.4" stroke-linejoin="round"/></svg>
<div class="t" style="left:827px;top:124.5px;width:80px;text-align:center;line-height:16px">Bild</div>
<svg style="position:absolute;left:866px;top:147.4px;width:7px;height:4px;overflow:visible;" viewBox="0 0 7 4"><path d="M0.4,0.4 L3.5,3.6 L6.6,0.4" fill="none" stroke="#444" stroke-width="1.4" stroke-linecap="round" stroke-linejoin="round"/></svg>
<svg style="position:absolute;left:902.4px;top:92.4px;width:27px;height:27px;overflow:visible;" viewBox="0 0 27 27"><path d="M5,18.6 H0.7 V0.7 H18.6 V5" fill="none" stroke="#444" stroke-width="1.4"/><circle cx="17" cy="17" r="9.3" fill="none" stroke="#444" stroke-width="1.4"/></svg>
<div class="t" style="left:875.3px;top:124.5px;width:80px;text-align:center;line-height:16px">Form</div>
<svg style="position:absolute;left:913.6px;top:147.4px;width:7px;height:4px;overflow:visible;" viewBox="0 0 7 4"><path d="M0.4,0.4 L3.5,3.6 L6.6,0.4" fill="none" stroke="#444" stroke-width="1.4" stroke-linecap="round" stroke-linejoin="round"/></svg>
<svg style="position:absolute;left:958px;top:93.6px;width:19px;height:18.6px;overflow:visible;" viewBox="0 0 19 18.6"><rect x="4" y="4.4" width="10.6" height="10" rx="0.8" fill="#a0a0a0"/><path d="M8,0.7 H2 Q0.7,0.7 0.7,2 V8 M10.8,17.9 H17 Q18.3,17.9 18.3,16.6 V10.8" fill="none" stroke="#a0a0a0" stroke-width="1.3"/><path d="M7.6,0.7 H10.6 M0.7,7.6 V10.6 M18.3,8 V11 M8.4,17.9 H11.4" stroke="#a0a0a0" stroke-width="1.3" opacity="0"/></svg>
<svg style="position:absolute;left:984px;top:101.7px;width:7px;height:4px;overflow:visible;" viewBox="0 0 7 4"><path d="M0.4,0.4 L3.5,3.6 L6.6,0.4" fill="none" stroke="#adadad" stroke-width="1.2" stroke-linecap="round" stroke-linejoin="round"/></svg>
<svg style="position:absolute;left:958px;top:131.6px;width:19px;height:18px;overflow:visible;" viewBox="0 0 19 18"><path d="M0.7,0 V18" stroke="#a0a0a0" stroke-width="1.3"/><rect x="5" y="2.7" width="7.2" height="4.4" rx="0.6" fill="none" stroke="#a0a0a0" stroke-width="1.3"/><rect x="5" y="10.7" width="13.2" height="4.4" rx="0.6" fill="none" stroke="#a0a0a0" stroke-width="1.3"/></svg>
<svg style="position:absolute;left:984px;top:138.9px;width:7px;height:4px;overflow:visible;" viewBox="0 0 7 4"><path d="M0.4,0.4 L3.5,3.6 L6.6,0.4" fill="none" stroke="#adadad" stroke-width="1.2" stroke-linecap="round" stroke-linejoin="round"/></svg>
<svg style="position:absolute;left:1027px;top:95px;width:18.4px;height:16.4px;overflow:visible;" viewBox="0 0 18.4 16.4"><path d="M10.4,1.2 Q11.4,0.2 12.4,1.2 L17.2,6 Q18.2,7 17.2,8 L10,15.2 H5.4 L1.2,11 Q0.2,10 1.2,9 Z M5.2,5.8 L12,12.8 M8,15.6 H17" fill="none" stroke="#a0a0a0" stroke-width="1.2" stroke-linejoin="round"/></svg>
<svg style="position:absolute;left:1028.6px;top:131px;width:16.6px;height:19px;overflow:visible;" viewBox="0 0 16.6 19"><rect x="2.6" y="0.7" width="13.2" height="5" rx="1.2" fill="none" stroke="#a0a0a0" stroke-width="1.3"/><path d="M2.6,3.2 H0.7 V8.4 H8.8 V11" fill="none" stroke="#a0a0a0" stroke-width="1.3"/><rect x="7.2" y="10.6" width="3.4" height="8.2" rx="0.8" fill="#a0a0a0"/></svg>
<svg style="position:absolute;left:1069px;top:93.6px;width:18.8px;height:18.8px;overflow:visible;" viewBox="0 0 18.8 18.8"><rect x="1" y="1" width="8.4" height="8.4" fill="#cfcfcf"/><rect x="9.4" y="1" width="8.4" height="8.4" fill="#f1f1f1"/><rect x="1" y="9.4" width="8.4" height="8.4" fill="#a8a8a8"/><rect x="9.4" y="9.4" width="8.4" height="8.4" fill="#7a7a7a"/><rect x="0.75" y="0.75" width="17.3" height="17.3" fill="none" stroke="#444" stroke-width="1.5"/></svg>
<svg style="position:absolute;left:1095px;top:101.4px;width:7px;height:4px;overflow:visible;" viewBox="0 0 7 4"><path d="M0.4,0.4 L3.5,3.6 L6.6,0.4" fill="none" stroke="#444" stroke-width="1.4" stroke-linecap="round" stroke-linejoin="round"/></svg>
<svg style="position:absolute;left:1069px;top:132px;width:18.8px;height:17px;overflow:visible;" viewBox="0 0 18.8 17"><path d="M0,5.9 H4.2 M2.1,5.9 V16.3 M0,16.3 H4.2" stroke="#444" stroke-width="1.4" fill="none"/><path d="M6.6,0 V4 M18,0 V4 M6.6,2 H18" stroke="#444" stroke-width="1.4" fill="none"/><rect x="6.8" y="6.3" width="11.2" height="10" rx="1" fill="none" stroke="#444" stroke-width="1.5"/></svg>
<svg style="position:absolute;left:1095px;top:138.8px;width:7px;height:4px;overflow:visible;" viewBox="0 0 7 4"><path d="M0.4,0.4 L3.5,3.6 L6.6,0.4" fill="none" stroke="#444" stroke-width="1.4" stroke-linecap="round" stroke-linejoin="round"/></svg>
<div style="position:absolute;left:1120.3px;top:91.6px;width:287.7px;height:59.6px;background:#fff;border:1px solid #d8d8d8;box-sizing:border-box;border-radius:2px"></div>
<div style="position:absolute;left:1121px;top:92px;width:123px;height:59px;background:#fff;border:3px solid #888;box-sizing:border-box"></div>
<div class="t" style="left:1133.5px;top:104.3px;-webkit-text-stroke:0;color:#000;font-size:31.2px;line-height:34px">Aa</div>
<div style="position:absolute;left:1129.0px;top:136.3px;width:8px;height:3.8px;background:#5b9bd5"></div>
<div style="position:absolute;left:1138.42px;top:136.3px;width:8px;height:3.8px;background:#ed7d31"></div>
<div style="position:absolute;left:1147.84px;top:136.3px;width:8px;height:3.8px;background:#a5a5a5"></div>
<div style="position:absolute;left:1157.26px;top:136.3px;width:8px;height:3.8px;background:#ffc000"></div>
<div style="position:absolute;left:1166.68px;top:136.3px;width:8px;height:3.8px;background:#4472c4"></div>
<div style="position:absolute;left:1176.1px;top:136.3px;width:8px;height:3.8px;background:#70ad47"></div>
<div style="position:absolute;left:1248.0px;top:95.0px;width:8.17px;height:4.8px;background:#fdf040"></div>
<div style="position:absolute;left:1255.87px;top:95.0px;width:8.17px;height:4.8px;background:#f8e040"></div>
<div style="position:absolute;left:1263.73px;top:95.0px;width:8.17px;height:4.8px;background:#f8e040"></div>
<div style="position:absolute;left:1271.6px;top:95.0px;width:8.17px;height:4.8px;background:#c03050"></div>
<div style="position:absolute;left:1279.47px;top:95.0px;width:8.17px;height:4.8px;background:#e03030"></div>
<div style="position:absolute;left:1287.33px;top:95.0px;width:8.17px;height:4.8px;background:#b03070"></div>
<div style="position:absolute;left:1295.2px;top:95.0px;width:8.17px;height:4.8px;background:#e09050"></div>
<div style="position:absolute;left:1303.07px;top:95.0px;width:8.17px;height:4.8px;background:#f5d050"></div>
<div style="position:absolute;left:1310.93px;top:95.0px;width:8.17px;height:4.8px;background:#f0b0a0"></div>
<div style="position:absolute;left:1318.8px;top:95.0px;width:8.17px;height:4.8px;background:#50a860"></div>
<div style="position:absolute;left:1326.67px;top:95.0px;width:8.17px;height:4.8px;background:#40a050"></div>
<div style="position:absolute;left:1334.53px;top:95.0px;width:8.17px;height:4.8px;background:#70c888"></div>
<div style="position:absolute;left:1342.4px;top:95.0px;width:8.17px;height:4.8px;background:#1020d8"></div>
<div style="position:absolute;left:1350.27px;top:95.0px;width:8.17px;height:4.8px;background:#0010e0"></div>
<div style="position:absolute;left:1358.13px;top:95.0px;width:8.17px;height:4.8px;background:#3040e0"></div>
<div style="position:absolute;left:1248.0px;top:99.47px;width:8.17px;height:4.8px;background:#f8d848"></div>
<div style="position:absolute;left:1255.87px;top:99.47px;width:8.17px;height:4.8px;background:#f8e040"></div>
<div style="position:absolute;left:1263.73px;top:99.47px;width:8.17px;height:4.8px;background:#f0c838"></div>
<div style="position:absolute;left:1271.6px;top:99.47px;width:8.17px;height:4.8px;background:#d02830"></div>
<div style="position:absolute;left:1279.47px;top:99.47px;width:8.17px;height:4.8px;background:#e06858"></div>
<div style="position:absolute;left:1287.33px;top:99.47px;width:8.17px;height:4.8px;background:#c82840"></div>
<div style="position:absolute;left:1295.2px;top:99.47px;width:8.17px;height:4.8px;background:#fdf040"></div>
<div style="position:absolute;left:1303.07px;top:99.47px;width:8.17px;height:4.8px;background:#f0d880"></div>
<div style="position:absolute;left:1310.93px;top:99.47px;width:8.17px;height:4.8px;background:#f8e838"></div>
<div style="position:absolute;left:1318.8px;top:99.47px;width:8.17px;height:4.8px;background:#48a058"></div>
<div style="position:absolute;left:1326.67px;top:99.47px;width:8.17px;height:4.8px;background:#60b878"></div>
<div style="position:absolute;left:1334.53px;top:99.47px;width:8.17px;height:4.8px;background:#48a860"></div>
<div style="position:absolute;left:1342.4px;top:99.47px;width:8.17px;height:4.8px;background:#2030d0"></div>
<div style="position:absolute;left:1350.27px;top:99.47px;width:8.17px;height:4.8px;background:#6080e8"></div>
<div style="position:absolute;left:1358.13px;top:99.47px;width:8.17px;height:4.8px;background:#3048e0"></div>
<div style="position:absolute;left:1248.0px;top:103.94px;width:8.17px;height:4.47px;background:#d85868"></div>
<div style="position:absolute;left:1255.87px;top:103.94px;width:8.17px;height:4.47px;background:#fdf038"></div>
<div style="position:absolute;left:1263.73px;top:103.94px;width:8.17px;height:4.47px;background:#e0d030"></div>
<div style="position:absolute;left:1271.6px;top:103.94px;width:8.17px;height:4.47px;background:#d83038"></div>
<div style="position:absolute;left:1279.47px;top:103.94px;width:8.17px;height:4.47px;background:#e03030"></div>
<div style="position:absolute;left:1287.33px;top:103.94px;width:8.17px;height:4.47px;background:#e83838"></div>
<div style="position:absolute;left:1295.2px;top:103.94px;width:8.17px;height:4.47px;background:#f0e038"></div>
<div style="position:absolute;left:1303.07px;top:103.94px;width:8.17px;height:4.47px;background:#e8d838"></div>
<div style="position:absolute;left:1310.93px;top:103.94px;width:8.17px;height:4.47px;background:#f8e838"></div>
<div style="position:absolute;left:1318.8px;top:103.94px;width:8.17px;height:4.47px;background:#40a050"></div>
<div style="position:absolute;left:1326.67px;top:103.94px;width:8.17px;height:4.47px;background:#309040"></div>
<div style="position:absolute;left:1334.53px;top:103.94px;width:8.17px;height:4.47px;background:#40a050"></div>
<div style="position:absolute;left:1342.4px;top:103.94px;width:8.17px;height:4.47px;background:#0008d0"></div>
<div style="position:absolute;left:1350.27px;top:103.94px;width:8.17px;height:4.47px;background:#0000e8"></div>
<div style="position:absolute;left:1358.13px;top:103.94px;width:8.17px;height:4.47px;background:#0810d0"></div>
<div class="t" style="left:1258px;top:105.6px;-webkit-text-stroke:0;color:#00007c;font-size:33.5px;line-height:34px;font-family:'Liberation Serif',serif;transform:scaleX(0.92);transform-origin:0 0">Aa</div>
<div style="position:absolute;left:1253.3px;top:136.3px;width:8px;height:4.1px;background:#0000fc"></div>
<div style="position:absolute;left:1262.72px;top:136.3px;width:8px;height:4.1px;background:#e83ce8"></div>
<div style="position:absolute;left:1272.1399999999999px;top:136.3px;width:8px;height:4.1px;background:#3ca45c"></div>
<div style="position:absolute;left:1281.56px;top:136.3px;width:8px;height:4.1px;background:#e42c1c"></div>
<div style="position:absolute;left:1290.98px;top:136.3px;width:8px;height:4.1px;background:#4aa4c0"></div>
<div style="position:absolute;left:1300.3999999999999px;top:136.3px;width:8px;height:4.1px;background:#fdfd40"></div>
<div style="position:absolute;left:1247.97px;top:146.1px;width:14.39px;height:2.3px;background:#1010e0"></div>
<div style="position:absolute;left:1262.16px;top:146.1px;width:7.2px;height:2.3px;background:#fdf060"></div>
<div style="position:absolute;left:1269.15px;top:146.1px;width:13.81px;height:2.3px;background:#f8e868"></div>
<div style="position:absolute;left:1282.76px;top:146.1px;width:7.49px;height:2.3px;background:#c03058"></div>
<div style="position:absolute;left:1290.05px;top:146.1px;width:6.52px;height:2.3px;background:#e03838"></div>
<div style="position:absolute;left:1296.37px;top:146.1px;width:7.49px;height:2.3px;background:#b03878"></div>
<div style="position:absolute;left:1303.65px;top:146.1px;width:6.52px;height:2.3px;background:#e09860"></div>
<div style="position:absolute;left:1309.97px;top:146.1px;width:7.97px;height:2.3px;background:#f8e070"></div>
<div style="position:absolute;left:1317.75px;top:146.1px;width:6.23px;height:2.3px;background:#f0b8b0"></div>
<div style="position:absolute;left:1323.77px;top:146.1px;width:14.58px;height:2.3px;background:#50a868"></div>
<div style="position:absolute;left:1338.15px;top:146.1px;width:6.81px;height:2.3px;background:#80cc98"></div>
<div style="position:absolute;left:1344.76px;top:146.1px;width:21.48px;height:2.3px;background:#1010e0"></div>
<div style="position:absolute;left:1368.6px;top:92.6px;width:1px;height:57.6px;background:#e0e0e0"></div>
<svg style="position:absolute;left:1381.5px;top:118px;width:14.2px;height:7.8px;overflow:visible;" viewBox="0 0 14.2 7.8"><path d="M0.6,0.6 L7.1,7 L13.6,0.6" fill="none" stroke="#444" stroke-width="1.4"/></svg>
<svg style="position:absolute;left:16.7px;top:198.5px;width:18.6px;height:18px;overflow:visible;" viewBox="0 0 18.6 18"><circle cx="7.2" cy="7.2" r="6.4" fill="none" stroke="#444" stroke-width="1.5"/><path d="M11.8,11.8 L18,17.6" stroke="#444" stroke-width="1.6"/></svg>
<svg style="position:absolute;left:17.6px;top:249.7px;width:16px;height:18.3px;overflow:visible;" viewBox="0 0 16 18.3"><rect x="0.7" y="0.7" width="14.6" height="16.9" rx="0.8" fill="none" stroke="#fff" stroke-width="1.4"/><rect x="3.4" y="3.6" width="9.2" height="4.3" fill="none" stroke="#fff" stroke-width="1.3"/><rect x="3.4" y="10.4" width="9.2" height="4.3" fill="none" stroke="#fff" stroke-width="1.3"/></svg>
<svg style="position:absolute;left:15.4px;top:299.4px;width:21.6px;height:19.4px;overflow:visible;" viewBox="0 0 21.6 19.4"><path d="M1.8,0.75 H19.8 Q20.85,0.75 20.85,1.8 V13.4 Q20.85,14.45 19.8,14.45 H11.4 L8,18 L4.8,14.45 H1.8 Q0.75,14.45 0.75,13.4 V1.8 Q0.75,0.75 1.8,0.75 Z" fill="none" stroke="#444" stroke-width="1.5" stroke-linejoin="round"/><path d="M4.6,4.6 H17 M4.6,7.6 H17 M4.6,10.6 H13" stroke="#444" stroke-width="1.4"/></svg>
<svg style="position:absolute;left:16.7px;top:350.7px;width:19.4px;height:19.4px;overflow:visible;" viewBox="0 0 19.4 19.4"><circle cx="9.7" cy="9.7" r="8.9" fill="none" stroke="#444" stroke-width="1.5"/><path d="M9.7,8.3 V14.4" stroke="#444" stroke-width="1.7"/><circle cx="9.7" cy="5.6" r="1.1" fill="#444"/></svg>
<div class="t" style="left:1162.3px;top:177px;font-weight:bold;line-height:18px">Hintergrund</div>
<div style="position:absolute;left:1162.3px;top:197px;width:258.3px;height:28px;background:#fff;border:1px solid #cfcfcf;border-radius:3px;box-sizing:border-box"></div>
<div class="t" style="left:1167.7px;top:202.6px;line-height:18px">Bild oder Textur</div>
<svg style="position:absolute;left:1407px;top:209.6px;width:7px;height:4px;overflow:visible;" viewBox="0 0 7 4"><path d="M0.4,0.4 L3.5,3.6 L6.6,0.4" fill="none" stroke="#444" stroke-width="1.4" stroke-linecap="round" stroke-linejoin="round"/></svg>
<div style="position:absolute;left:1162.3px;top:237px;width:258.3px;height:28px;background:#fff;border:1px solid #cfcfcf;border-radius:3px;box-sizing:border-box"></div>
<div class="t" style="left:1162.3px;top:242.4px;line-height:18px;width:248px;text-align:center">Bild auswählen</div>
<svg style="position:absolute;left:1407px;top:249.4px;width:7px;height:4px;overflow:visible;" viewBox="0 0 7 4"><path d="M0.4,0.4 L3.5,3.6 L6.6,0.4" fill="none" stroke="#444" stroke-width="1.4" stroke-linecap="round" stroke-linejoin="round"/></svg>
<div style="position:absolute;left:1162.3px;top:277px;width:119.6px;height:28.4px;background:#fff;border:1px solid #cfcfcf;border-radius:3px;box-sizing:border-box"></div>
<div class="t" style="left:1167.7px;top:282.7px;line-height:18px">Ausdehnung</div>
<svg style="position:absolute;left:1267.8px;top:289.7px;width:7px;height:4px;overflow:visible;" viewBox="0 0 7 4"><path d="M0.4,0.4 L3.5,3.6 L6.6,0.4" fill="none" stroke="#444" stroke-width="1.4" stroke-linecap="round" stroke-linejoin="round"/></svg>
<div style="position:absolute;left:1301.4px;top:277px;width:119.2px;height:106.2px;background:#fff;border:1px solid #cfcfcf;border-radius:3px;box-sizing:border-box"></div>
<svg style="position:absolute;left:1329.1px;top:305px;width:66.8px;height:50.5px" viewBox="0 0 667 375" preserveAspectRatio="none">
<defs><radialGradient id="gg2" cx="54%" cy="50%" r="85%">
<stop offset="0" stop-color="#95bf3c"/><stop offset="0.45" stop-color="#8cb638"/><stop offset="0.75" stop-color="#7aa530"/><stop offset="1" stop-color="#5d8a24"/></radialGradient>
<radialGradient id="gd2" cx="0%" cy="100%" r="34%"><stop offset="0" stop-color="rgba(30,70,5,0.5)"/><stop offset="1" stop-color="rgba(30,70,5,0)"/></radialGradient>
<radialGradient id="gt2" cx="100%" cy="0%" r="42%"><stop offset="0" stop-color="rgba(40,70,10,0.26)"/><stop offset="1" stop-color="rgba(40,70,10,0)"/></radialGradient>
</defs>
<rect width="667" height="375" fill="url(#gg2)"/>
<path d="M30,-12 C30.8,-10.0 30.8,-8.7 35.0,0.0 C39.2,8.7 45.7,25.0 55.0,40.0 C64.3,55.0 75.0,70.0 91.0,90.0 C107.0,110.0 128.3,136.7 151.0,160.0 C173.7,183.3 201.8,210.0 227.0,230.0 C252.2,250.0 279.5,267.5 302.0,280.0 C324.5,292.5 338.2,295.0 362.0,305.0 C385.8,315.0 417.0,328.3 445.0,340.0 C473.0,351.7 513.3,368.2 530.0,375.0 C546.7,381.8 542.5,380.0 545.0,381.0 L-10,381 L-10,-12 Z" fill="rgba(50,90,10,0.085)"/>
<path d="M-10,113 C-8.3,112.2 -14.2,114.3 0.0,108.0 C14.2,101.7 49.8,85.0 75.0,75.0 C100.2,65.0 121.7,57.2 151.0,48.0 C180.3,38.8 217.5,27.5 251.0,20.0 C284.5,12.5 330.5,6.5 352.0,3.0 C373.5,-0.5 375.3,-0.3 380.0,-1.0 L-10,-12 Z" fill="rgba(190,235,100,0.07)"/>
<path d="M450,323 C458.9,322.5 482.4,322.2 503.7,320.0 C525.0,317.8 550.8,314.8 578.0,310.0 C605.2,305.2 650.0,295.1 667.0,291.4 C684.0,287.7 677.8,288.6 680.0,288.0 L680,381 L545,381 Z" fill="rgba(40,80,10,0.10)"/>
<path d="M-10,200 C-8.3,200.7 -9.1,200.3 0.0,204.0 C9.1,207.7 29.7,216.2 44.5,222.0 C59.3,227.8 74.2,233.2 89.0,239.0 C103.8,244.8 114.3,250.0 133.0,256.5 C151.7,263.0 172.8,269.9 201.0,278.0 C229.2,286.1 272.5,298.3 302.0,305.0 C331.5,311.7 353.3,315.0 378.0,318.0 C402.7,321.0 438.0,322.2 450.0,323.0 L450,323 C434.2,323.3 383.2,325.4 355.0,324.8 C326.8,324.2 303.6,322.4 280.7,319.3 C257.8,316.2 242.1,312.1 217.5,306.0 C192.9,299.9 154.4,288.8 133.0,283.0 C111.6,277.2 103.8,274.8 89.0,271.4 C74.2,268.0 59.3,266.1 44.5,262.5 C29.7,258.9 9.1,252.6 0.0,250.0 C-9.1,247.4 -8.3,247.5 -10.0,247.0 Z" fill="rgba(190,240,90,0.20)"/>
<rect width="667" height="375" fill="url(#gd2)"/>
<rect width="667" height="375" fill="url(#gt2)"/>
<path d="M30,-12 C30.8,-10.0 30.8,-8.7 35.0,0.0 C39.2,8.7 45.7,25.0 55.0,40.0 C64.3,55.0 75.0,70.0 91.0,90.0 C107.0,110.0 128.3,136.7 151.0,160.0 C173.7,183.3 201.8,210.0 227.0,230.0 C252.2,250.0 279.5,267.5 302.0,280.0 C324.5,292.5 352.0,300.8 362.0,305.0" stroke="rgba(55,95,15,0.5)" stroke-width="1.0" fill="none"/>
<path d="M362,305 C375.8,310.8 417.0,328.3 445.0,340.0 C473.0,351.7 513.3,368.2 530.0,375.0 C546.7,381.8 542.5,380.0 545.0,381.0" stroke="rgba(205,248,120,0.55)" stroke-width="1.2" fill="none"/>
<path d="M503.7,320 C516.1,318.3 550.8,314.8 578.0,310.0 C605.2,305.2 650.0,295.1 667.0,291.4 C684.0,287.7 677.8,288.6 680.0,288.0 L680,312 C677.8,312.2 677.0,312.0 667.0,313.0 C657.0,314.0 634.8,316.7 620.0,318.0 C605.2,319.3 591.3,320.5 578.0,321.0 C564.7,321.5 552.4,321.2 540.0,321.0 C527.6,320.8 509.8,320.2 503.7,320.0 Z" fill="rgba(40,70,10,0.14)"/>
<path d="M-10,113 C-8.3,112.2 -14.2,114.3 0.0,108.0 C14.2,101.7 49.8,85.0 75.0,75.0 C100.2,65.0 121.7,57.2 151.0,48.0 C180.3,38.8 217.5,27.5 251.0,20.0 C284.5,12.5 330.5,6.5 352.0,3.0 C373.5,-0.5 375.3,-0.3 380.0,-1.0 L384,-11 C379.3,-10.3 377.5,-10.5 356.0,-7.0 C334.5,-3.5 288.5,3.5 255.0,10.0 C221.5,16.5 184.3,23.8 155.0,32.0 C125.7,40.2 104.2,49.0 79.0,59.0 C53.8,69.0 18.2,85.7 4.0,92.0 C-10.2,98.3 -4.3,96.2 -6.0,97.0 Z" fill="rgba(205,245,110,0.10)"/>
<path d="M-10,113 C-8.3,112.2 -14.2,114.3 0.0,108.0 C14.2,101.7 49.8,85.0 75.0,75.0 C100.2,65.0 121.7,57.2 151.0,48.0 C180.3,38.8 217.5,27.5 251.0,20.0 C284.5,12.5 330.5,6.5 352.0,3.0 C373.5,-0.5 375.3,-0.3 380.0,-1.0" stroke="rgba(205,245,110,0.5)" stroke-width="1.3" fill="none"/>
<path d="M-10,247 C-8.3,247.5 -9.1,247.4 0.0,250.0 C9.1,252.6 29.7,258.9 44.5,262.5 C59.3,266.1 74.2,268.0 89.0,271.4 C103.8,274.8 111.6,277.2 133.0,283.0 C154.4,288.8 192.9,299.9 217.5,306.0 C242.1,312.1 257.8,316.2 280.7,319.3 C303.6,322.4 326.8,324.2 355.0,324.8 C383.2,325.4 434.2,323.3 450.0,323.0" stroke="rgba(200,245,110,0.22)" stroke-width="1.0" fill="none"/>
<path d="M-10,200 C-8.3,200.7 -9.1,200.3 0.0,204.0 C9.1,207.7 29.7,216.2 44.5,222.0 C59.3,227.8 74.2,233.2 89.0,239.0 C103.8,244.8 114.3,250.0 133.0,256.5 C151.7,263.0 172.8,269.9 201.0,278.0 C229.2,286.1 272.5,298.3 302.0,305.0 C331.5,311.7 353.3,315.0 378.0,318.0 C402.7,321.0 429.1,322.7 450.0,323.0 C470.9,323.3 482.4,322.2 503.7,320.0 C525.0,317.8 550.8,314.8 578.0,310.0 C605.2,305.2 650.0,295.1 667.0,291.4 C684.0,287.7 677.8,288.6 680.0,288.0" stroke="rgba(205,248,110,0.8)" stroke-width="1.4" fill="none"/>
</svg>
<div class="t" style="left:1162.3px;top:335px;line-height:18px">Aus Textur</div>
<div style="position:absolute;left:1162.3px;top:355px;width:119.6px;height:28.2px;background:#fff;border:1px solid #cfcfcf;border-radius:3px;box-sizing:border-box"></div>
<div class="t" style="left:1167.7px;top:361px;line-height:18px">Auswahl</div>
<svg style="position:absolute;left:1267.8px;top:367.4px;width:7px;height:4px;overflow:visible;" viewBox="0 0 7 4"><path d="M0.4,0.4 L3.5,3.6 L6.6,0.4" fill="none" stroke="#444" stroke-width="1.4" stroke-linecap="round" stroke-linejoin="round"/></svg>
<div class="t" style="left:1162.3px;top:395.2px;font-weight:bold;line-height:18px">Undurchsichtigkeit</div>
<div class="t" style="left:1162.3px;top:420.6px;line-height:18px">0</div>
<div style="position:absolute;left:1177px;top:428.2px;width:100px;height:4px;background:#d2d2d2;border-radius:2px"></div>
<div style="position:absolute;left:1271.4px;top:422.5px;width:16.2px;height:16.2px;background:#fff;border:1.4px solid #444;border-radius:50%;box-sizing:border-box"></div>
<div class="t" style="left:1290.4px;top:420.6px;line-height:18px">100</div>
<div style="position:absolute;left:1338.8px;top:415px;width:81.8px;height:28.4px;background:#fff;border:1px solid #cfcfcf;border-radius:3px;box-sizing:border-box"></div>
<div class="t" style="left:1353.9px;top:420.6px;line-height:18px">100 %</div>
<svg style="position:absolute;left:1405px;top:420.4px;width:7.5px;height:4.4px;overflow:visible;" viewBox="0 0 7.5 4.4"><path d="M0.5,4 L3.75,0.7 L7,4" fill="none" stroke="#444" stroke-width="1.4" stroke-linecap="round" stroke-linejoin="round"/></svg>
<svg style="position:absolute;left:1405px;top:434.6px;width:7.5px;height:4.4px;overflow:visible;" viewBox="0 0 7.5 4.4"><path d="M0.4,0.4 L3.75,4.0 L7.1,0.4" fill="none" stroke="#444" stroke-width="1.4" stroke-linecap="round" stroke-linejoin="round"/></svg>
<div style="position:absolute;left:1162.3px;top:453.6px;width:258.3px;height:1px;background:#cbcbcb"></div>
<div style="position:absolute;left:1162.3px;top:465.8px;width:18.3px;height:18.3px;background:#fff;border:1px solid #cfcfcf;border-radius:3px;box-sizing:border-box"></div>
<div class="t" style="left:1191.8px;top:466px;line-height:18px">Foliennummer anzeigen</div>
<div style="position:absolute;left:1162.3px;top:496.4px;width:18.3px;height:18.3px;background:#fff;border:1px solid #cfcfcf;border-radius:3px;box-sizing:border-box"></div>
<div class="t" style="left:1191.8px;top:496.7px;line-height:18px">Datum und Uhrzeit anzeigen</div>
<div style="position:absolute;left:104px;top:160px;width:369px;height:462.4px;background:#fff;border-radius:5px;box-shadow:0 5px 16px rgba(0,0,0,0.26),0 0 1.5px rgba(0,0,0,0.35)"></div>
<div style="position:absolute;left:115px;top:172.6px;width:160.8px;height:91px;overflow:hidden"><svg style="position:absolute;left:0px;top:0px;width:160.8px;height:91px" viewBox="0 0 667 375" preserveAspectRatio="none">
<defs><radialGradient id="gg3" cx="54%" cy="50%" r="85%">
<stop offset="0" stop-color="#95bf3c"/><stop offset="0.45" stop-color="#8cb638"/><stop offset="0.75" stop-color="#7aa530"/><stop offset="1" stop-color="#5d8a24"/></radialGradient>
<radialGradient id="gd3" cx="0%" cy="100%" r="34%"><stop offset="0" stop-color="rgba(30,70,5,0.5)"/><stop offset="1" stop-color="rgba(30,70,5,0)"/></radialGradient>
<radialGradient id="gt3" cx="100%" cy="0%" r="42%"><stop offset="0" stop-color="rgba(40,70,10,0.26)"/><stop offset="1" stop-color="rgba(40,70,10,0)"/></radialGradient>
</defs>
<rect width="667" height="375" fill="url(#gg3)"/>
<path d="M30,-12 C30.8,-10.0 30.8,-8.7 35.0,0.0 C39.2,8.7 45.7,25.0 55.0,40.0 C64.3,55.0 75.0,70.0 91.0,90.0 C107.0,110.0 128.3,136.7 151.0,160.0 C173.7,183.3 201.8,210.0 227.0,230.0 C252.2,250.0 279.5,267.5 302.0,280.0 C324.5,292.5 338.2,295.0 362.0,305.0 C385.8,315.0 417.0,328.3 445.0,340.0 C473.0,351.7 513.3,368.2 530.0,375.0 C546.7,381.8 542.5,380.0 545.0,381.0 L-10,381 L-10,-12 Z" fill="rgba(50,90,10,0.085)"/>
<path d="M-10,113 C-8.3,112.2 -14.2,114.3 0.0,108.0 C14.2,101.7 49.8,85.0 75.0,75.0 C100.2,65.0 121.7,57.2 151.0,48.0 C180.3,38.8 217.5,27.5 251.0,20.0 C284.5,12.5 330.5,6.5 352.0,3.0 C373.5,-0.5 375.3,-0.3 380.0,-1.0 L-10,-12 Z" fill="rgba(190,235,100,0.07)"/>
<path d="M450,323 C458.9,322.5 482.4,322.2 503.7,320.0 C525.0,317.8 550.8,314.8 578.0,310.0 C605.2,305.2 650.0,295.1 667.0,291.4 C684.0,287.7 677.8,288.6 680.0,288.0 L680,381 L545,381 Z" fill="rgba(40,80,10,0.10)"/>
<path d="M-10,200 C-8.3,200.7 -9.1,200.3 0.0,204.0 C9.1,207.7 29.7,216.2 44.5,222.0 C59.3,227.8 74.2,233.2 89.0,239.0 C103.8,244.8 114.3,250.0 133.0,256.5 C151.7,263.0 172.8,269.9 201.0,278.0 C229.2,286.1 272.5,298.3 302.0,305.0 C331.5,311.7 353.3,315.0 378.0,318.0 C402.7,321.0 438.0,322.2 450.0,323.0 L450,323 C434.2,323.3 383.2,325.4 355.0,324.8 C326.8,324.2 303.6,322.4 280.7,319.3 C257.8,316.2 242.1,312.1 217.5,306.0 C192.9,299.9 154.4,288.8 133.0,283.0 C111.6,277.2 103.8,274.8 89.0,271.4 C74.2,268.0 59.3,266.1 44.5,262.5 C29.7,258.9 9.1,252.6 0.0,250.0 C-9.1,247.4 -8.3,247.5 -10.0,247.0 Z" fill="rgba(190,240,90,0.20)"/>
<rect width="667" height="375" fill="url(#gd3)"/>
<rect width="667" height="375" fill="url(#gt3)"/>
<path d="M30,-12 C30.8,-10.0 30.8,-8.7 35.0,0.0 C39.2,8.7 45.7,25.0 55.0,40.0 C64.3,55.0 75.0,70.0 91.0,90.0 C107.0,110.0 128.3,136.7 151.0,160.0 C173.7,183.3 201.8,210.0 227.0,230.0 C252.2,250.0 279.5,267.5 302.0,280.0 C324.5,292.5 352.0,300.8 362.0,305.0" stroke="rgba(55,95,15,0.5)" stroke-width="1.7" fill="none"/>
<path d="M362,305 C375.8,310.8 417.0,328.3 445.0,340.0 C473.0,351.7 513.3,368.2 530.0,375.0 C546.7,381.8 542.5,380.0 545.0,381.0" stroke="rgba(205,248,120,0.55)" stroke-width="2.04" fill="none"/>
<path d="M503.7,320 C516.1,318.3 550.8,314.8 578.0,310.0 C605.2,305.2 650.0,295.1 667.0,291.4 C684.0,287.7 677.8,288.6 680.0,288.0 L680,312 C677.8,312.2 677.0,312.0 667.0,313.0 C657.0,314.0 634.8,316.7 620.0,318.0 C605.2,319.3 591.3,320.5 578.0,321.0 C564.7,321.5 552.4,321.2 540.0,321.0 C527.6,320.8 509.8,320.2 503.7,320.0 Z" fill="rgba(40,70,10,0.14)"/>
<path d="M-10,113 C-8.3,112.2 -14.2,114.3 0.0,108.0 C14.2,101.7 49.8,85.0 75.0,75.0 C100.2,65.0 121.7,57.2 151.0,48.0 C180.3,38.8 217.5,27.5 251.0,20.0 C284.5,12.5 330.5,6.5 352.0,3.0 C373.5,-0.5 375.3,-0.3 380.0,-1.0 L384,-11 C379.3,-10.3 377.5,-10.5 356.0,-7.0 C334.5,-3.5 288.5,3.5 255.0,10.0 C221.5,16.5 184.3,23.8 155.0,32.0 C125.7,40.2 104.2,49.0 79.0,59.0 C53.8,69.0 18.2,85.7 4.0,92.0 C-10.2,98.3 -4.3,96.2 -6.0,97.0 Z" fill="rgba(205,245,110,0.10)"/>
<path d="M-10,113 C-8.3,112.2 -14.2,114.3 0.0,108.0 C14.2,101.7 49.8,85.0 75.0,75.0 C100.2,65.0 121.7,57.2 151.0,48.0 C180.3,38.8 217.5,27.5 251.0,20.0 C284.5,12.5 330.5,6.5 352.0,3.0 C373.5,-0.5 375.3,-0.3 380.0,-1.0" stroke="rgba(205,245,110,0.5)" stroke-width="2.21" fill="none"/>
<path d="M-10,247 C-8.3,247.5 -9.1,247.4 0.0,250.0 C9.1,252.6 29.7,258.9 44.5,262.5 C59.3,266.1 74.2,268.0 89.0,271.4 C103.8,274.8 111.6,277.2 133.0,283.0 C154.4,288.8 192.9,299.9 217.5,306.0 C242.1,312.1 257.8,316.2 280.7,319.3 C303.6,322.4 326.8,324.2 355.0,324.8 C383.2,325.4 434.2,323.3 450.0,323.0" stroke="rgba(200,245,110,0.22)" stroke-width="1.7" fill="none"/>
<path d="M-10,200 C-8.3,200.7 -9.1,200.3 0.0,204.0 C9.1,207.7 29.7,216.2 44.5,222.0 C59.3,227.8 74.2,233.2 89.0,239.0 C103.8,244.8 114.3,250.0 133.0,256.5 C151.7,263.0 172.8,269.9 201.0,278.0 C229.2,286.1 272.5,298.3 302.0,305.0 C331.5,311.7 353.3,315.0 378.0,318.0 C402.7,321.0 429.1,322.7 450.0,323.0 C470.9,323.3 482.4,322.2 503.7,320.0 C525.0,317.8 550.8,314.8 578.0,310.0 C605.2,305.2 650.0,295.1 667.0,291.4 C684.0,287.7 677.8,288.6 680.0,288.0" stroke="rgba(205,248,110,0.8)" stroke-width="2.38" fill="none"/>
<rect x="144.2" y="0" width="8.2" height="375" fill="rgba(0,0,0,0.05)"/><rect x="152.6" y="0" width="3.6" height="375" fill="rgba(255,255,255,0.8)"/><rect x="156.2" y="0" width="20.5" height="375" fill="rgba(0,0,0,0.05)"/><rect x="176.7" y="0" width="25.1" height="375" fill="rgba(255,255,255,0.5)"/><rect x="201.8" y="0" width="13.4" height="375" fill="rgba(255,255,255,0.45)"/><rect x="229.2" y="0" width="30.9" height="375" fill="rgba(255,255,255,0.76)"/><rect x="266" y="0" width="10.1" height="375" fill="rgba(255,255,255,0.62)"/><rect x="276.1" y="0" width="10.7" height="375" fill="rgba(255,255,255,0.5)"/><rect x="286.8" y="0" width="36.2" height="375" fill="rgba(255,255,255,0.4)"/><rect x="323" y="0" width="14.5" height="375" fill="rgba(255,255,255,0.3)"/><rect x="337.5" y="0" width="27.1" height="375" fill="rgba(0,0,0,0.03)"/><rect x="364.6" y="0" width="22.6" height="375" fill="rgba(255,255,255,0.66)"/><rect x="387.2" y="0" width="12.2" height="375" fill="rgba(255,255,255,0.4)"/><rect x="399.4" y="0" width="11.4" height="375" fill="rgba(255,255,255,0.43)"/><rect x="417.1" y="0" width="20.9" height="375" fill="rgba(255,255,255,0.45)"/><rect x="459" y="0" width="3" height="375" fill="rgba(255,255,255,0.1)"/><rect x="462" y="0" width="20.6" height="375" fill="rgba(255,255,255,0.66)"/><rect x="482.6" y="0" width="29.7" height="375" fill="rgba(255,255,255,0.2)"/><rect x="512.3" y="0" width="17.0" height="375" fill="rgba(255,255,255,0.66)"/><rect x="529.3" y="0" width="8.8" height="375" fill="rgba(255,255,255,0.2)"/></svg><svg style="position:absolute;left:0px;top:0px;width:160.8px;height:90.6px;overflow:visible;" viewBox="0 0 160.4 90.6"><rect x="32" y="24.4" width="102" height="48.6" fill="#fff"/><rect x="42" y="29.4" width="81.6" height="20.6" fill="none" stroke="#555" stroke-width="1.1" stroke-dasharray="2.6 2.2"/><rect x="42" y="54.4" width="81.6" height="14.4" fill="none" stroke="#555" stroke-width="1.1" stroke-dasharray="2.6 2.2"/></svg></div>
<div style="position:absolute;left:286px;top:172.6px;width:160.8px;height:91px;overflow:hidden"><svg style="position:absolute;left:0px;top:0px;width:160.8px;height:91px" viewBox="0 0 667 375" preserveAspectRatio="none">
<defs><radialGradient id="gg4" cx="54%" cy="50%" r="85%">
<stop offset="0" stop-color="#95bf3c"/><stop offset="0.45" stop-color="#8cb638"/><stop offset="0.75" stop-color="#7aa530"/><stop offset="1" stop-color="#5d8a24"/></radialGradient>
<radialGradient id="gd4" cx="0%" cy="100%" r="34%"><stop offset="0" stop-color="rgba(30,70,5,0.5)"/><stop offset="1" stop-color="rgba(30,70,5,0)"/></radialGradient>
<radialGradient id="gt4" cx="100%" cy="0%" r="42%"><stop offset="0" stop-color="rgba(40,70,10,0.26)"/><stop offset="1" stop-color="rgba(40,70,10,0)"/></radialGradient>
</defs>
<rect width="667" height="375" fill="url(#gg4)"/>
<path d="M30,-12 C30.8,-10.0 30.8,-8.7 35.0,0.0 C39.2,8.7 45.7,25.0 55.0,40.0 C64.3,55.0 75.0,70.0 91.0,90.0 C107.0,110.0 128.3,136.7 151.0,160.0 C173.7,183.3 201.8,210.0 227.0,230.0 C252.2,250.0 279.5,267.5 302.0,280.0 C324.5,292.5 338.2,295.0 362.0,305.0 C385.8,315.0 417.0,328.3 445.0,340.0 C473.0,351.7 513.3,368.2 530.0,375.0 C546.7,381.8 542.5,380.0 545.0,381.0 L-10,381 L-10,-12 Z" fill="rgba(50,90,10,0.085)"/>
<path d="M-10,113 C-8.3,112.2 -14.2,114.3 0.0,108.0 C14.2,101.7 49.8,85.0 75.0,75.0 C100.2,65.0 121.7,57.2 151.0,48.0 C180.3,38.8 217.5,27.5 251.0,20.0 C284.5,12.5 330.5,6.5 352.0,3.0 C373.5,-0.5 375.3,-0.3 380.0,-1.0 L-10,-12 Z" fill="rgba(190,235,100,0.07)"/>
<path d="M450,323 C458.9,322.5 482.4,322.2 503.7,320.0 C525.0,317.8 550.8,314.8 578.0,310.0 C605.2,305.2 650.0,295.1 667.0,291.4 C684.0,287.7 677.8,288.6 680.0,288.0 L680,381 L545,381 Z" fill="rgba(40,80,10,0.10)"/>
<path d="M-10,200 C-8.3,200.7 -9.1,200.3 0.0,204.0 C9.1,207.7 29.7,216.2 44.5,222.0 C59.3,227.8 74.2,233.2 89.0,239.0 C103.8,244.8 114.3,250.0 133.0,256.5 C151.7,263.0 172.8,269.9 201.0,278.0 C229.2,286.1 272.5,298.3 302.0,305.0 C331.5,311.7 353.3,315.0 378.0,318.0 C402.7,321.0 438.0,322.2 450.0,323.0 L450,323 C434.2,323.3 383.2,325.4 355.0,324.8 C326.8,324.2 303.6,322.4 280.7,319.3 C257.8,316.2 242.1,312.1 217.5,306.0 C192.9,299.9 154.4,288.8 133.0,283.0 C111.6,277.2 103.8,274.8 89.0,271.4 C74.2,268.0 59.3,266.1 44.5,262.5 C29.7,258.9 9.1,252.6 0.0,250.0 C-9.1,247.4 -8.3,247.5 -10.0,247.0 Z" fill="rgba(190,240,90,0.20)"/>
<rect width="667" height="375" fill="url(#gd4)"/>
<rect width="667" height="375" fill="url(#gt4)"/>
<path d="M30,-12 C30.8,-10.0 30.8,-8.7 35.0,0.0 C39.2,8.7 45.7,25.0 55.0,40.0 C64.3,55.0 75.0,70.0 91.0,90.0 C107.0,110.0 128.3,136.7 151.0,160.0 C173.7,183.3 201.8,210.0 227.0,230.0 C252.2,250.0 279.5,267.5 302.0,280.0 C324.5,292.5 352.0,300.8 362.0,305.0" stroke="rgba(55,95,15,0.5)" stroke-width="1.7" fill="none"/>
<path d="M362,305 C375.8,310.8 417.0,328.3 445.0,340.0 C473.0,351.7 513.3,368.2 530.0,375.0 C546.7,381.8 542.5,380.0 545.0,381.0" stroke="rgba(205,248,120,0.55)" stroke-width="2.04" fill="none"/>
<path d="M503.7,320 C516.1,318.3 550.8,314.8 578.0,310.0 C605.2,305.2 650.0,295.1 667.0,291.4 C684.0,287.7 677.8,288.6 680.0,288.0 L680,312 C677.8,312.2 677.0,312.0 667.0,313.0 C657.0,314.0 634.8,316.7 620.0,318.0 C605.2,319.3 591.3,320.5 578.0,321.0 C564.7,321.5 552.4,321.2 540.0,321.0 C527.6,320.8 509.8,320.2 503.7,320.0 Z" fill="rgba(40,70,10,0.14)"/>
<path d="M-10,113 C-8.3,112.2 -14.2,114.3 0.0,108.0 C14.2,101.7 49.8,85.0 75.0,75.0 C100.2,65.0 121.7,57.2 151.0,48.0 C180.3,38.8 217.5,27.5 251.0,20.0 C284.5,12.5 330.5,6.5 352.0,3.0 C373.5,-0.5 375.3,-0.3 380.0,-1.0 L384,-11 C379.3,-10.3 377.5,-10.5 356.0,-7.0 C334.5,-3.5 288.5,3.5 255.0,10.0 C221.5,16.5 184.3,23.8 155.0,32.0 C125.7,40.2 104.2,49.0 79.0,59.0 C53.8,69.0 18.2,85.7 4.0,92.0 C-10.2,98.3 -4.3,96.2 -6.0,97.0 Z" fill="rgba(205,245,110,0.10)"/>
<path d="M-10,113 C-8.3,112.2 -14.2,114.3 0.0,108.0 C14.2,101.7 49.8,85.0 75.0,75.0 C100.2,65.0 121.7,57.2 151.0,48.0 C180.3,38.8 217.5,27.5 251.0,20.0 C284.5,12.5 330.5,6.5 352.0,3.0 C373.5,-0.5 375.3,-0.3 380.0,-1.0" stroke="rgba(205,245,110,0.5)" stroke-width="2.21" fill="none"/>
<path d="M-10,247 C-8.3,247.5 -9.1,247.4 0.0,250.0 C9.1,252.6 29.7,258.9 44.5,262.5 C59.3,266.1 74.2,268.0 89.0,271.4 C103.8,274.8 111.6,277.2 133.0,283.0 C154.4,288.8 192.9,299.9 217.5,306.0 C242.1,312.1 257.8,316.2 280.7,319.3 C303.6,322.4 326.8,324.2 355.0,324.8 C383.2,325.4 434.2,323.3 450.0,323.0" stroke="rgba(200,245,110,0.22)" stroke-width="1.7" fill="none"/>
<path d="M-10,200 C-8.3,200.7 -9.1,200.3 0.0,204.0 C9.1,207.7 29.7,216.2 44.5,222.0 C59.3,227.8 74.2,233.2 89.0,239.0 C103.8,244.8 114.3,250.0 133.0,256.5 C151.7,263.0 172.8,269.9 201.0,278.0 C229.2,286.1 272.5,298.3 302.0,305.0 C331.5,311.7 353.3,315.0 378.0,318.0 C402.7,321.0 429.1,322.7 450.0,323.0 C470.9,323.3 482.4,322.2 503.7,320.0 C525.0,317.8 550.8,314.8 578.0,310.0 C605.2,305.2 650.0,295.1 667.0,291.4 C684.0,287.7 677.8,288.6 680.0,288.0" stroke="rgba(205,248,110,0.8)" stroke-width="2.38" fill="none"/>
</svg><svg style="position:absolute;left:0px;top:0px;width:160.8px;height:90.6px;overflow:visible;" viewBox="0 0 160.4 90.6"><rect x="9" y="1.8" width="142.6" height="12.6" fill="none" stroke="rgba(255,255,255,0.9)" stroke-width="1.2"/><rect x="9" y="1.8" width="142.6" height="12.6" fill="none" stroke="#444" stroke-width="0.95" stroke-dasharray="2.3 2.1"/><rect x="9" y="18" width="142.6" height="65.8" fill="#e6f0cd"/><rect x="9" y="18" width="142.6" height="65.8" fill="none" stroke="rgba(255,255,255,0.9)" stroke-width="1.2"/><rect x="9" y="18" width="142.6" height="65.8" fill="none" stroke="#444" stroke-width="0.95" stroke-dasharray="2.3 2.1"/></svg></div>
<div style="position:absolute;left:115px;top:297px;width:160.8px;height:91px;overflow:hidden"><svg style="position:absolute;left:0px;top:0px;width:160.8px;height:91px" viewBox="0 0 667 375" preserveAspectRatio="none">
<defs><radialGradient id="gg5" cx="54%" cy="50%" r="85%">
<stop offset="0" stop-color="#95bf3c"/><stop offset="0.45" stop-color="#8cb638"/><stop offset="0.75" stop-color="#7aa530"/><stop offset="1" stop-color="#5d8a24"/></radialGradient>
<radialGradient id="gd5" cx="0%" cy="100%" r="34%"><stop offset="0" stop-color="rgba(30,70,5,0.5)"/><stop offset="1" stop-color="rgba(30,70,5,0)"/></radialGradient>
<radialGradient id="gt5" cx="100%" cy="0%" r="42%"><stop offset="0" stop-color="rgba(40,70,10,0.26)"/><stop offset="1" stop-color="rgba(40,70,10,0)"/></radialGradient>
</defs>
<rect width="667" height="375" fill="url(#gg5)"/>
<path d="M30,-12 C30.8,-10.0 30.8,-8.7 35.0,0.0 C39.2,8.7 45.7,25.0 55.0,40.0 C64.3,55.0 75.0,70.0 91.0,90.0 C107.0,110.0 128.3,136.7 151.0,160.0 C173.7,183.3 201.8,210.0 227.0,230.0 C252.2,250.0 279.5,267.5 302.0,280.0 C324.5,292.5 338.2,295.0 362.0,305.0 C385.8,315.0 417.0,328.3 445.0,340.0 C473.0,351.7 513.3,368.2 530.0,375.0 C546.7,381.8 542.5,380.0 545.0,381.0 L-10,381 L-10,-12 Z" fill="rgba(50,90,10,0.085)"/>
<path d="M-10,113 C-8.3,112.2 -14.2,114.3 0.0,108.0 C14.2,101.7 49.8,85.0 75.0,75.0 C100.2,65.0 121.7,57.2 151.0,48.0 C180.3,38.8 217.5,27.5 251.0,20.0 C284.5,12.5 330.5,6.5 352.0,3.0 C373.5,-0.5 375.3,-0.3 380.0,-1.0 L-10,-12 Z" fill="rgba(190,235,100,0.07)"/>
<path d="M450,323 C458.9,322.5 482.4,322.2 503.7,320.0 C525.0,317.8 550.8,314.8 578.0,310.0 C605.2,305.2 650.0,295.1 667.0,291.4 C684.0,287.7 677.8,288.6 680.0,288.0 L680,381 L545,381 Z" fill="rgba(40,80,10,0.10)"/>
<path d="M-10,200 C-8.3,200.7 -9.1,200.3 0.0,204.0 C9.1,207.7 29.7,216.2 44.5,222.0 C59.3,227.8 74.2,233.2 89.0,239.0 C103.8,244.8 114.3,250.0 133.0,256.5 C151.7,263.0 172.8,269.9 201.0,278.0 C229.2,286.1 272.5,298.3 302.0,305.0 C331.5,311.7 353.3,315.0 378.0,318.0 C402.7,321.0 438.0,322.2 450.0,323.0 L450,323 C434.2,323.3 383.2,325.4 355.0,324.8 C326.8,324.2 303.6,322.4 280.7,319.3 C257.8,316.2 242.1,312.1 217.5,306.0 C192.9,299.9 154.4,288.8 133.0,283.0 C111.6,277.2 103.8,274.8 89.0,271.4 C74.2,268.0 59.3,266.1 44.5,262.5 C29.7,258.9 9.1,252.6 0.0,250.0 C-9.1,247.4 -8.3,247.5 -10.0,247.0 Z" fill="rgba(190,240,90,0.20)"/>
<rect width="667" height="375" fill="url(#gd5)"/>
<rect width="667" height="375" fill="url(#gt5)"/>
<path d="M30,-12 C30.8,-10.0 30.8,-8.7 35.0,0.0 C39.2,8.7 45.7,25.0 55.0,40.0 C64.3,55.0 75.0,70.0 91.0,90.0 C107.0,110.0 128.3,136.7 151.0,160.0 C173.7,183.3 201.8,210.0 227.0,230.0 C252.2,250.0 279.5,267.5 302.0,280.0 C324.5,292.5 352.0,300.8 362.0,305.0" stroke="rgba(55,95,15,0.5)" stroke-width="1.7" fill="none"/>
<path d="M362,305 C375.8,310.8 417.0,328.3 445.0,340.0 C473.0,351.7 513.3,368.2 530.0,375.0 C546.7,381.8 542.5,380.0 545.0,381.0" stroke="rgba(205,248,120,0.55)" stroke-width="2.04" fill="none"/>
<path d="M503.7,320 C516.1,318.3 550.8,314.8 578.0,310.0 C605.2,305.2 650.0,295.1 667.0,291.4 C684.0,287.7 677.8,288.6 680.0,288.0 L680,312 C677.8,312.2 677.0,312.0 667.0,313.0 C657.0,314.0 634.8,316.7 620.0,318.0 C605.2,319.3 591.3,320.5 578.0,321.0 C564.7,321.5 552.4,321.2 540.0,321.0 C527.6,320.8 509.8,320.2 503.7,320.0 Z" fill="rgba(40,70,10,0.14)"/>
<path d="M-10,113 C-8.3,112.2 -14.2,114.3 0.0,108.0 C14.2,101.7 49.8,85.0 75.0,75.0 C100.2,65.0 121.7,57.2 151.0,48.0 C180.3,38.8 217.5,27.5 251.0,20.0 C284.5,12.5 330.5,6.5 352.0,3.0 C373.5,-0.5 375.3,-0.3 380.0,-1.0 L384,-11 C379.3,-10.3 377.5,-10.5 356.0,-7.0 C334.5,-3.5 288.5,3.5 255.0,10.0 C221.5,16.5 184.3,23.8 155.0,32.0 C125.7,40.2 104.2,49.0 79.0,59.0 C53.8,69.0 18.2,85.7 4.0,92.0 C-10.2,98.3 -4.3,96.2 -6.0,97.0 Z" fill="rgba(205,245,110,0.10)"/>
<path d="M-10,113 C-8.3,112.2 -14.2,114.3 0.0,108.0 C14.2,101.7 49.8,85.0 75.0,75.0 C100.2,65.0 121.7,57.2 151.0,48.0 C180.3,38.8 217.5,27.5 251.0,20.0 C284.5,12.5 330.5,6.5 352.0,3.0 C373.5,-0.5 375.3,-0.3 380.0,-1.0" stroke="rgba(205,245,110,0.5)" stroke-width="2.21" fill="none"/>
<path d="M-10,247 C-8.3,247.5 -9.1,247.4 0.0,250.0 C9.1,252.6 29.7,258.9 44.5,262.5 C59.3,266.1 74.2,268.0 89.0,271.4 C103.8,274.8 111.6,277.2 133.0,283.0 C154.4,288.8 192.9,299.9 217.5,306.0 C242.1,312.1 257.8,316.2 280.7,319.3 C303.6,322.4 326.8,324.2 355.0,324.8 C383.2,325.4 434.2,323.3 450.0,323.0" stroke="rgba(200,245,110,0.22)" stroke-width="1.7" fill="none"/>
<path d="M-10,200 C-8.3,200.7 -9.1,200.3 0.0,204.0 C9.1,207.7 29.7,216.2 44.5,222.0 C59.3,227.8 74.2,233.2 89.0,239.0 C103.8,244.8 114.3,250.0 133.0,256.5 C151.7,263.0 172.8,269.9 201.0,278.0 C229.2,286.1 272.5,298.3 302.0,305.0 C331.5,311.7 353.3,315.0 378.0,318.0 C402.7,321.0 429.1,322.7 450.0,323.0 C470.9,323.3 482.4,322.2 503.7,320.0 C525.0,317.8 550.8,314.8 578.0,310.0 C605.2,305.2 650.0,295.1 667.0,291.4 C684.0,287.7 677.8,288.6 680.0,288.0" stroke="rgba(205,248,110,0.8)" stroke-width="2.38" fill="none"/>
</svg><svg style="position:absolute;left:0px;top:0px;width:160.8px;height:90.6px;overflow:visible;" viewBox="0 0 160.4 90.6"><rect x="9.4" y="2" width="142" height="12" fill="none" stroke="rgba(255,255,255,0.9)" stroke-width="1.2"/><rect x="9.4" y="2" width="142" height="12" fill="none" stroke="#444" stroke-width="0.95" stroke-dasharray="2.3 2.1"/><rect x="13" y="16" width="136.4" height="65" fill="#e6f0cd"/><rect x="13" y="16" width="136.4" height="65" fill="none" stroke="rgba(255,255,255,0.9)" stroke-width="1.2"/><rect x="13" y="16" width="136.4" height="65" fill="none" stroke="#444" stroke-width="0.95" stroke-dasharray="2.3 2.1"/></svg></div>
<div style="position:absolute;left:286px;top:297px;width:160.8px;height:91px;overflow:hidden"><svg style="position:absolute;left:0px;top:0px;width:160.8px;height:91px" viewBox="0 0 667 375" preserveAspectRatio="none">
<defs><radialGradient id="gg6" cx="54%" cy="50%" r="85%">
<stop offset="0" stop-color="#95bf3c"/><stop offset="0.45" stop-color="#8cb638"/><stop offset="0.75" stop-color="#7aa530"/><stop offset="1" stop-color="#5d8a24"/></radialGradient>
<radialGradient id="gd6" cx="0%" cy="100%" r="34%"><stop offset="0" stop-color="rgba(30,70,5,0.5)"/><stop offset="1" stop-color="rgba(30,70,5,0)"/></radialGradient>
<radialGradient id="gt6" cx="100%" cy="0%" r="42%"><stop offset="0" stop-color="rgba(40,70,10,0.26)"/><stop offset="1" stop-color="rgba(40,70,10,0)"/></radialGradient>
</defs>
<rect width="667" height="375" fill="url(#gg6)"/>
<path d="M30,-12 C30.8,-10.0 30.8,-8.7 35.0,0.0 C39.2,8.7 45.7,25.0 55.0,40.0 C64.3,55.0 75.0,70.0 91.0,90.0 C107.0,110.0 128.3,136.7 151.0,160.0 C173.7,183.3 201.8,210.0 227.0,230.0 C252.2,250.0 279.5,267.5 302.0,280.0 C324.5,292.5 338.2,295.0 362.0,305.0 C385.8,315.0 417.0,328.3 445.0,340.0 C473.0,351.7 513.3,368.2 530.0,375.0 C546.7,381.8 542.5,380.0 545.0,381.0 L-10,381 L-10,-12 Z" fill="rgba(50,90,10,0.085)"/>
<path d="M-10,113 C-8.3,112.2 -14.2,114.3 0.0,108.0 C14.2,101.7 49.8,85.0 75.0,75.0 C100.2,65.0 121.7,57.2 151.0,48.0 C180.3,38.8 217.5,27.5 251.0,20.0 C284.5,12.5 330.5,6.5 352.0,3.0 C373.5,-0.5 375.3,-0.3 380.0,-1.0 L-10,-12 Z" fill="rgba(190,235,100,0.07)"/>
<path d="M450,323 C458.9,322.5 482.4,322.2 503.7,320.0 C525.0,317.8 550.8,314.8 578.0,310.0 C605.2,305.2 650.0,295.1 667.0,291.4 C684.0,287.7 677.8,288.6 680.0,288.0 L680,381 L545,381 Z" fill="rgba(40,80,10,0.10)"/>
<path d="M-10,200 C-8.3,200.7 -9.1,200.3 0.0,204.0 C9.1,207.7 29.7,216.2 44.5,222.0 C59.3,227.8 74.2,233.2 89.0,239.0 C103.8,244.8 114.3,250.0 133.0,256.5 C151.7,263.0 172.8,269.9 201.0,278.0 C229.2,286.1 272.5,298.3 302.0,305.0 C331.5,311.7 353.3,315.0 378.0,318.0 C402.7,321.0 438.0,322.2 450.0,323.0 L450,323 C434.2,323.3 383.2,325.4 355.0,324.8 C326.8,324.2 303.6,322.4 280.7,319.3 C257.8,316.2 242.1,312.1 217.5,306.0 C192.9,299.9 154.4,288.8 133.0,283.0 C111.6,277.2 103.8,274.8 89.0,271.4 C74.2,268.0 59.3,266.1 44.5,262.5 C29.7,258.9 9.1,252.6 0.0,250.0 C-9.1,247.4 -8.3,247.5 -10.0,247.0 Z" fill="rgba(190,240,90,0.20)"/>
<rect width="667" height="375" fill="url(#gd6)"/>
<rect width="667" height="375" fill="url(#gt6)"/>
<path d="M30,-12 C30.8,-10.0 30.8,-8.7 35.0,0.0 C39.2,8.7 45.7,25.0 55.0,40.0 C64.3,55.0 75.0,70.0 91.0,90.0 C107.0,110.0 128.3,136.7 151.0,160.0 C173.7,183.3 201.8,210.0 227.0,230.0 C252.2,250.0 279.5,267.5 302.0,280.0 C324.5,292.5 352.0,300.8 362.0,305.0" stroke="rgba(55,95,15,0.5)" stroke-width="1.7" fill="none"/>
<path d="M362,305 C375.8,310.8 417.0,328.3 445.0,340.0 C473.0,351.7 513.3,368.2 530.0,375.0 C546.7,381.8 542.5,380.0 545.0,381.0" stroke="rgba(205,248,120,0.55)" stroke-width="2.04" fill="none"/>
<path d="M503.7,320 C516.1,318.3 550.8,314.8 578.0,310.0 C605.2,305.2 650.0,295.1 667.0,291.4 C684.0,287.7 677.8,288.6 680.0,288.0 L680,312 C677.8,312.2 677.0,312.0 667.0,313.0 C657.0,314.0 634.8,316.7 620.0,318.0 C605.2,319.3 591.3,320.5 578.0,321.0 C564.7,321.5 552.4,321.2 540.0,321.0 C527.6,320.8 509.8,320.2 503.7,320.0 Z" fill="rgba(40,70,10,0.14)"/>
<path d="M-10,113 C-8.3,112.2 -14.2,114.3 0.0,108.0 C14.2,101.7 49.8,85.0 75.0,75.0 C100.2,65.0 121.7,57.2 151.0,48.0 C180.3,38.8 217.5,27.5 251.0,20.0 C284.5,12.5 330.5,6.5 352.0,3.0 C373.5,-0.5 375.3,-0.3 380.0,-1.0 L384,-11 C379.3,-10.3 377.5,-10.5 356.0,-7.0 C334.5,-3.5 288.5,3.5 255.0,10.0 C221.5,16.5 184.3,23.8 155.0,32.0 C125.7,40.2 104.2,49.0 79.0,59.0 C53.8,69.0 18.2,85.7 4.0,92.0 C-10.2,98.3 -4.3,96.2 -6.0,97.0 Z" fill="rgba(205,245,110,0.10)"/>
<path d="M-10,113 C-8.3,112.2 -14.2,114.3 0.0,108.0 C14.2,101.7 49.8,85.0 75.0,75.0 C100.2,65.0 121.7,57.2 151.0,48.0 C180.3,38.8 217.5,27.5 251.0,20.0 C284.5,12.5 330.5,6.5 352.0,3.0 C373.5,-0.5 375.3,-0.3 380.0,-1.0" stroke="rgba(205,245,110,0.5)" stroke-width="2.21" fill="none"/>
<path d="M-10,247 C-8.3,247.5 -9.1,247.4 0.0,250.0 C9.1,252.6 29.7,258.9 44.5,262.5 C59.3,266.1 74.2,268.0 89.0,271.4 C103.8,274.8 111.6,277.2 133.0,283.0 C154.4,288.8 192.9,299.9 217.5,306.0 C242.1,312.1 257.8,316.2 280.7,319.3 C303.6,322.4 326.8,324.2 355.0,324.8 C383.2,325.4 434.2,323.3 450.0,323.0" stroke="rgba(200,245,110,0.22)" stroke-width="1.7" fill="none"/>
<path d="M-10,200 C-8.3,200.7 -9.1,200.3 0.0,204.0 C9.1,207.7 29.7,216.2 44.5,222.0 C59.3,227.8 74.2,233.2 89.0,239.0 C103.8,244.8 114.3,250.0 133.0,256.5 C151.7,263.0 172.8,269.9 201.0,278.0 C229.2,286.1 272.5,298.3 302.0,305.0 C331.5,311.7 353.3,315.0 378.0,318.0 C402.7,321.0 429.1,322.7 450.0,323.0 C470.9,323.3 482.4,322.2 503.7,320.0 C525.0,317.8 550.8,314.8 578.0,310.0 C605.2,305.2 650.0,295.1 667.0,291.4 C684.0,287.7 677.8,288.6 680.0,288.0" stroke="rgba(205,248,110,0.8)" stroke-width="2.38" fill="none"/>
</svg><svg style="position:absolute;left:0px;top:0px;width:160.8px;height:90.6px;overflow:visible;" viewBox="0 0 160.4 90.6"><rect x="9" y="1.6" width="142.6" height="12.4" fill="none" stroke="rgba(255,255,255,0.9)" stroke-width="1.2"/><rect x="9" y="1.6" width="142.6" height="12.4" fill="none" stroke="#444" stroke-width="0.95" stroke-dasharray="2.3 2.1"/><rect x="8.4" y="16" width="70.6" height="65" fill="none" stroke="rgba(255,255,255,0.9)" stroke-width="1.2"/><rect x="8.4" y="16" width="70.6" height="65" fill="none" stroke="#444" stroke-width="0.95" stroke-dasharray="2.3 2.1"/><rect x="81.6" y="16" width="71.4" height="65" fill="none" stroke="rgba(255,255,255,0.9)" stroke-width="1.2"/><rect x="81.6" y="16" width="71.4" height="65" fill="none" stroke="#444" stroke-width="0.95" stroke-dasharray="2.3 2.1"/></svg></div>
<div style="position:absolute;left:115px;top:421.2px;width:160.8px;height:91px;overflow:hidden"><svg style="position:absolute;left:0px;top:0px;width:160.8px;height:91px" viewBox="0 0 667 375" preserveAspectRatio="none">
<defs><radialGradient id="gg7" cx="54%" cy="50%" r="85%">
<stop offset="0" stop-color="#95bf3c"/><stop offset="0.45" stop-color="#8cb638"/><stop offset="0.75" stop-color="#7aa530"/><stop offset="1" stop-color="#5d8a24"/></radialGradient>
<radialGradient id="gd7" cx="0%" cy="100%" r="34%"><stop offset="0" stop-color="rgba(30,70,5,0.5)"/><stop offset="1" stop-color="rgba(30,70,5,0)"/></radialGradient>
<radialGradient id="gt7" cx="100%" cy="0%" r="42%"><stop offset="0" stop-color="rgba(40,70,10,0.26)"/><stop offset="1" stop-color="rgba(40,70,10,0)"/></radialGradient>
</defs>
<rect width="667" height="375" fill="url(#gg7)"/>
<path d="M30,-12 C30.8,-10.0 30.8,-8.7 35.0,0.0 C39.2,8.7 45.7,25.0 55.0,40.0 C64.3,55.0 75.0,70.0 91.0,90.0 C107.0,110.0 128.3,136.7 151.0,160.0 C173.7,183.3 201.8,210.0 227.0,230.0 C252.2,250.0 279.5,267.5 302.0,280.0 C324.5,292.5 338.2,295.0 362.0,305.0 C385.8,315.0 417.0,328.3 445.0,340.0 C473.0,351.7 513.3,368.2 530.0,375.0 C546.7,381.8 542.5,380.0 545.0,381.0 L-10,381 L-10,-12 Z" fill="rgba(50,90,10,0.085)"/>
<path d="M-10,113 C-8.3,112.2 -14.2,114.3 0.0,108.0 C14.2,101.7 49.8,85.0 75.0,75.0 C100.2,65.0 121.7,57.2 151.0,48.0 C180.3,38.8 217.5,27.5 251.0,20.0 C284.5,12.5 330.5,6.5 352.0,3.0 C373.5,-0.5 375.3,-0.3 380.0,-1.0 L-10,-12 Z" fill="rgba(190,235,100,0.07)"/>
<path d="M450,323 C458.9,322.5 482.4,322.2 503.7,320.0 C525.0,317.8 550.8,314.8 578.0,310.0 C605.2,305.2 650.0,295.1 667.0,291.4 C684.0,287.7 677.8,288.6 680.0,288.0 L680,381 L545,381 Z" fill="rgba(40,80,10,0.10)"/>
<path d="M-10,200 C-8.3,200.7 -9.1,200.3 0.0,204.0 C9.1,207.7 29.7,216.2 44.5,222.0 C59.3,227.8 74.2,233.2 89.0,239.0 C103.8,244.8 114.3,250.0 133.0,256.5 C151.7,263.0 172.8,269.9 201.0,278.0 C229.2,286.1 272.5,298.3 302.0,305.0 C331.5,311.7 353.3,315.0 378.0,318.0 C402.7,321.0 438.0,322.2 450.0,323.0 L450,323 C434.2,323.3 383.2,325.4 355.0,324.8 C326.8,324.2 303.6,322.4 280.7,319.3 C257.8,316.2 242.1,312.1 217.5,306.0 C192.9,299.9 154.4,288.8 133.0,283.0 C111.6,277.2 103.8,274.8 89.0,271.4 C74.2,268.0 59.3,266.1 44.5,262.5 C29.7,258.9 9.1,252.6 0.0,250.0 C-9.1,247.4 -8.3,247.5 -10.0,247.0 Z" fill="rgba(190,240,90,0.20)"/>
<rect width="667" height="375" fill="url(#gd7)"/>
<rect width="667" height="375" fill="url(#gt7)"/>
<path d="M30,-12 C30.8,-10.0 30.8,-8.7 35.0,0.0 C39.2,8.7 45.7,25.0 55.0,40.0 C64.3,55.0 75.0,70.0 91.0,90.0 C107.0,110.0 128.3,136.7 151.0,160.0 C173.7,183.3 201.8,210.0 227.0,230.0 C252.2,250.0 279.5,267.5 302.0,280.0 C324.5,292.5 352.0,300.8 362.0,305.0" stroke="rgba(55,95,15,0.5)" stroke-width="1.7" fill="none"/>
<path d="M362,305 C375.8,310.8 417.0,328.3 445.0,340.0 C473.0,351.7 513.3,368.2 530.0,375.0 C546.7,381.8 542.5,380.0 545.0,381.0" stroke="rgba(205,248,120,0.55)" stroke-width="2.04" fill="none"/>
<path d="M503.7,320 C516.1,318.3 550.8,314.8 578.0,310.0 C605.2,305.2 650.0,295.1 667.0,291.4 C684.0,287.7 677.8,288.6 680.0,288.0 L680,312 C677.8,312.2 677.0,312.0 667.0,313.0 C657.0,314.0 634.8,316.7 620.0,318.0 C605.2,319.3 591.3,320.5 578.0,321.0 C564.7,321.5 552.4,321.2 540.0,321.0 C527.6,320.8 509.8,320.2 503.7,320.0 Z" fill="rgba(40,70,10,0.14)"/>
<path d="M-10,113 C-8.3,112.2 -14.2,114.3 0.0,108.0 C14.2,101.7 49.8,85.0 75.0,75.0 C100.2,65.0 121.7,57.2 151.0,48.0 C180.3,38.8 217.5,27.5 251.0,20.0 C284.5,12.5 330.5,6.5 352.0,3.0 C373.5,-0.5 375.3,-0.3 380.0,-1.0 L384,-11 C379.3,-10.3 377.5,-10.5 356.0,-7.0 C334.5,-3.5 288.5,3.5 255.0,10.0 C221.5,16.5 184.3,23.8 155.0,32.0 C125.7,40.2 104.2,49.0 79.0,59.0 C53.8,69.0 18.2,85.7 4.0,92.0 C-10.2,98.3 -4.3,96.2 -6.0,97.0 Z" fill="rgba(205,245,110,0.10)"/>
<path d="M-10,113 C-8.3,112.2 -14.2,114.3 0.0,108.0 C14.2,101.7 49.8,85.0 75.0,75.0 C100.2,65.0 121.7,57.2 151.0,48.0 C180.3,38.8 217.5,27.5 251.0,20.0 C284.5,12.5 330.5,6.5 352.0,3.0 C373.5,-0.5 375.3,-0.3 380.0,-1.0" stroke="rgba(205,245,110,0.5)" stroke-width="2.21" fill="none"/>
<path d="M-10,247 C-8.3,247.5 -9.1,247.4 0.0,250.0 C9.1,252.6 29.7,258.9 44.5,262.5 C59.3,266.1 74.2,268.0 89.0,271.4 C103.8,274.8 111.6,277.2 133.0,283.0 C154.4,288.8 192.9,299.9 217.5,306.0 C242.1,312.1 257.8,316.2 280.7,319.3 C303.6,322.4 326.8,324.2 355.0,324.8 C383.2,325.4 434.2,323.3 450.0,323.0" stroke="rgba(200,245,110,0.22)" stroke-width="1.7" fill="none"/>
<path d="M-10,200 C-8.3,200.7 -9.1,200.3 0.0,204.0 C9.1,207.7 29.7,216.2 44.5,222.0 C59.3,227.8 74.2,233.2 89.0,239.0 C103.8,244.8 114.3,250.0 133.0,256.5 C151.7,263.0 172.8,269.9 201.0,278.0 C229.2,286.1 272.5,298.3 302.0,305.0 C331.5,311.7 353.3,315.0 378.0,318.0 C402.7,321.0 429.1,322.7 450.0,323.0 C470.9,323.3 482.4,322.2 503.7,320.0 C525.0,317.8 550.8,314.8 578.0,310.0 C605.2,305.2 650.0,295.1 667.0,291.4 C684.0,287.7 677.8,288.6 680.0,288.0" stroke="rgba(205,248,110,0.8)" stroke-width="2.38" fill="none"/>
</svg><svg style="position:absolute;left:0px;top:0px;width:160.8px;height:90.6px;overflow:visible;" viewBox="0 0 160.4 90.6"><rect x="9.4" y="2.8" width="142" height="11.4" fill="none" stroke="rgba(255,255,255,0.9)" stroke-width="1.2"/><rect x="9.4" y="2.8" width="142" height="11.4" fill="none" stroke="#444" stroke-width="0.95" stroke-dasharray="2.3 2.1"/><rect x="8.4" y="17.4" width="70.6" height="8" fill="none" stroke="rgba(255,255,255,0.9)" stroke-width="1.2"/><rect x="8.4" y="17.4" width="70.6" height="8" fill="none" stroke="#444" stroke-width="0.95" stroke-dasharray="2.3 2.1"/><rect x="81.6" y="17.4" width="71" height="8" fill="none" stroke="rgba(255,255,255,0.9)" stroke-width="1.2"/><rect x="81.6" y="17.4" width="71" height="8" fill="none" stroke="#444" stroke-width="0.95" stroke-dasharray="2.3 2.1"/><rect x="8.4" y="27.8" width="70.6" height="52.4" fill="none" stroke="rgba(255,255,255,0.9)" stroke-width="1.2"/><rect x="8.4" y="27.8" width="70.6" height="52.4" fill="none" stroke="#444" stroke-width="0.95" stroke-dasharray="2.3 2.1"/><rect x="81.6" y="27.8" width="71" height="52.4" fill="none" stroke="rgba(255,255,255,0.9)" stroke-width="1.2"/><rect x="81.6" y="27.8" width="71" height="52.4" fill="none" stroke="#444" stroke-width="0.95" stroke-dasharray="2.3 2.1"/></svg></div>
<div style="position:absolute;left:286px;top:421.2px;width:160.8px;height:91px;overflow:hidden"><svg style="position:absolute;left:0px;top:0px;width:160.8px;height:91px" viewBox="0 0 667 375" preserveAspectRatio="none">
<defs><radialGradient id="gg8" cx="54%" cy="50%" r="85%">
<stop offset="0" stop-color="#95bf3c"/><stop offset="0.45" stop-color="#8cb638"/><stop offset="0.75" stop-color="#7aa530"/><stop offset="1" stop-color="#5d8a24"/></radialGradient>
<radialGradient id="gd8" cx="0%" cy="100%" r="34%"><stop offset="0" stop-color="rgba(30,70,5,0.5)"/><stop offset="1" stop-color="rgba(30,70,5,0)"/></radialGradient>
<radialGradient id="gt8" cx="100%" cy="0%" r="42%"><stop offset="0" stop-color="rgba(40,70,10,0.26)"/><stop offset="1" stop-color="rgba(40,70,10,0)"/></radialGradient>
</defs>
<rect width="667" height="375" fill="url(#gg8)"/>
<path d="M30,-12 C30.8,-10.0 30.8,-8.7 35.0,0.0 C39.2,8.7 45.7,25.0 55.0,40.0 C64.3,55.0 75.0,70.0 91.0,90.0 C107.0,110.0 128.3,136.7 151.0,160.0 C173.7,183.3 201.8,210.0 227.0,230.0 C252.2,250.0 279.5,267.5 302.0,280.0 C324.5,292.5 338.2,295.0 362.0,305.0 C385.8,315.0 417.0,328.3 445.0,340.0 C473.0,351.7 513.3,368.2 530.0,375.0 C546.7,381.8 542.5,380.0 545.0,381.0 L-10,381 L-10,-12 Z" fill="rgba(50,90,10,0.085)"/>
<path d="M-10,113 C-8.3,112.2 -14.2,114.3 0.0,108.0 C14.2,101.7 49.8,85.0 75.0,75.0 C100.2,65.0 121.7,57.2 151.0,48.0 C180.3,38.8 217.5,27.5 251.0,20.0 C284.5,12.5 330.5,6.5 352.0,3.0 C373.5,-0.5 375.3,-0.3 380.0,-1.0 L-10,-12 Z" fill="rgba(190,235,100,0.07)"/>
<path d="M450,323 C458.9,322.5 482.4,322.2 503.7,320.0 C525.0,317.8 550.8,314.8 578.0,310.0 C605.2,305.2 650.0,295.1 667.0,291.4 C684.0,287.7 677.8,288.6 680.0,288.0 L680,381 L545,381 Z" fill="rgba(40,80,10,0.10)"/>
<path d="M-10,200 C-8.3,200.7 -9.1,200.3 0.0,204.0 C9.1,207.7 29.7,216.2 44.5,222.0 C59.3,227.8 74.2,233.2 89.0,239.0 C103.8,244.8 114.3,250.0 133.0,256.5 C151.7,263.0 172.8,269.9 201.0,278.0 C229.2,286.1 272.5,298.3 302.0,305.0 C331.5,311.7 353.3,315.0 378.0,318.0 C402.7,321.0 438.0,322.2 450.0,323.0 L450,323 C434.2,323.3 383.2,325.4 355.0,324.8 C326.8,324.2 303.6,322.4 280.7,319.3 C257.8,316.2 242.1,312.1 217.5,306.0 C192.9,299.9 154.4,288.8 133.0,283.0 C111.6,277.2 103.8,274.8 89.0,271.4 C74.2,268.0 59.3,266.1 44.5,262.5 C29.7,258.9 9.1,252.6 0.0,250.0 C-9.1,247.4 -8.3,247.5 -10.0,247.0 Z" fill="rgba(190,240,90,0.20)"/>
<rect width="667" height="375" fill="url(#gd8)"/>
<rect width="667" height="375" fill="url(#gt8)"/>
<path d="M30,-12 C30.8,-10.0 30.8,-8.7 35.0,0.0 C39.2,8.7 45.7,25.0 55.0,40.0 C64.3,55.0 75.0,70.0 91.0,90.0 C107.0,110.0 128.3,136.7 151.0,160.0 C173.7,183.3 201.8,210.0 227.0,230.0 C252.2,250.0 279.5,267.5 302.0,280.0 C324.5,292.5 352.0,300.8 362.0,305.0" stroke="rgba(55,95,15,0.5)" stroke-width="1.7" fill="none"/>
<path d="M362,305 C375.8,310.8 417.0,328.3 445.0,340.0 C473.0,351.7 513.3,368.2 530.0,375.0 C546.7,381.8 542.5,380.0 545.0,381.0" stroke="rgba(205,248,120,0.55)" stroke-width="2.04" fill="none"/>
<path d="M503.7,320 C516.1,318.3 550.8,314.8 578.0,310.0 C605.2,305.2 650.0,295.1 667.0,291.4 C684.0,287.7 677.8,288.6 680.0,288.0 L680,312 C677.8,312.2 677.0,312.0 667.0,313.0 C657.0,314.0 634.8,316.7 620.0,318.0 C605.2,319.3 591.3,320.5 578.0,321.0 C564.7,321.5 552.4,321.2 540.0,321.0 C527.6,320.8 509.8,320.2 503.7,320.0 Z" fill="rgba(40,70,10,0.14)"/>
<path d="M-10,113 C-8.3,112.2 -14.2,114.3 0.0,108.0 C14.2,101.7 49.8,85.0 75.0,75.0 C100.2,65.0 121.7,57.2 151.0,48.0 C180.3,38.8 217.5,27.5 251.0,20.0 C284.5,12.5 330.5,6.5 352.0,3.0 C373.5,-0.5 375.3,-0.3 380.0,-1.0 L384,-11 C379.3,-10.3 377.5,-10.5 356.0,-7.0 C334.5,-3.5 288.5,3.5 255.0,10.0 C221.5,16.5 184.3,23.8 155.0,32.0 C125.7,40.2 104.2,49.0 79.0,59.0 C53.8,69.0 18.2,85.7 4.0,92.0 C-10.2,98.3 -4.3,96.2 -6.0,97.0 Z" fill="rgba(205,245,110,0.10)"/>
<path d="M-10,113 C-8.3,112.2 -14.2,114.3 0.0,108.0 C14.2,101.7 49.8,85.0 75.0,75.0 C100.2,65.0 121.7,57.2 151.0,48.0 C180.3,38.8 217.5,27.5 251.0,20.0 C284.5,12.5 330.5,6.5 352.0,3.0 C373.5,-0.5 375.3,-0.3 380.0,-1.0" stroke="rgba(205,245,110,0.5)" stroke-width="2.21" fill="none"/>
<path d="M-10,247 C-8.3,247.5 -9.1,247.4 0.0,250.0 C9.1,252.6 29.7,258.9 44.5,262.5 C59.3,266.1 74.2,268.0 89.0,271.4 C103.8,274.8 111.6,277.2 133.0,283.0 C154.4,288.8 192.9,299.9 217.5,306.0 C242.1,312.1 257.8,316.2 280.7,319.3 C303.6,322.4 326.8,324.2 355.0,324.8 C383.2,325.4 434.2,323.3 450.0,323.0" stroke="rgba(200,245,110,0.22)" stroke-width="1.7" fill="none"/>
<path d="M-10,200 C-8.3,200.7 -9.1,200.3 0.0,204.0 C9.1,207.7 29.7,216.2 44.5,222.0 C59.3,227.8 74.2,233.2 89.0,239.0 C103.8,244.8 114.3,250.0 133.0,256.5 C151.7,263.0 172.8,269.9 201.0,278.0 C229.2,286.1 272.5,298.3 302.0,305.0 C331.5,311.7 353.3,315.0 378.0,318.0 C402.7,321.0 429.1,322.7 450.0,323.0 C470.9,323.3 482.4,322.2 503.7,320.0 C525.0,317.8 550.8,314.8 578.0,310.0 C605.2,305.2 650.0,295.1 667.0,291.4 C684.0,287.7 677.8,288.6 680.0,288.0" stroke="rgba(205,248,110,0.8)" stroke-width="2.38" fill="none"/>
</svg><svg style="position:absolute;left:0px;top:0px;width:160.8px;height:90.6px;overflow:visible;" viewBox="0 0 160.4 90.6"><rect x="9" y="2.4" width="142.6" height="11.8" fill="none" stroke="rgba(255,255,255,0.9)" stroke-width="1.2"/><rect x="9" y="2.4" width="142.6" height="11.8" fill="none" stroke="#444" stroke-width="0.95" stroke-dasharray="2.3 2.1"/></svg></div>
<div style="position:absolute;left:115px;top:545.8px;width:160.8px;height:22.2px;overflow:hidden"><svg style="position:absolute;left:0px;top:0px;width:160.8px;height:91px" viewBox="0 0 667 375" preserveAspectRatio="none">
<defs><radialGradient id="gg9" cx="54%" cy="50%" r="85%">
<stop offset="0" stop-color="#95bf3c"/><stop offset="0.45" stop-color="#8cb638"/><stop offset="0.75" stop-color="#7aa530"/><stop offset="1" stop-color="#5d8a24"/></radialGradient>
<radialGradient id="gd9" cx="0%" cy="100%" r="34%"><stop offset="0" stop-color="rgba(30,70,5,0.5)"/><stop offset="1" stop-color="rgba(30,70,5,0)"/></radialGradient>
<radialGradient id="gt9" cx="100%" cy="0%" r="42%"><stop offset="0" stop-color="rgba(40,70,10,0.26)"/><stop offset="1" stop-color="rgba(40,70,10,0)"/></radialGradient>
</defs>
<rect width="667" height="375" fill="url(#gg9)"/>
<path d="M30,-12 C30.8,-10.0 30.8,-8.7 35.0,0.0 C39.2,8.7 45.7,25.0 55.0,40.0 C64.3,55.0 75.0,70.0 91.0,90.0 C107.0,110.0 128.3,136.7 151.0,160.0 C173.7,183.3 201.8,210.0 227.0,230.0 C252.2,250.0 279.5,267.5 302.0,280.0 C324.5,292.5 338.2,295.0 362.0,305.0 C385.8,315.0 417.0,328.3 445.0,340.0 C473.0,351.7 513.3,368.2 530.0,375.0 C546.7,381.8 542.5,380.0 545.0,381.0 L-10,381 L-10,-12 Z" fill="rgba(50,90,10,0.085)"/>
<path d="M-10,113 C-8.3,112.2 -14.2,114.3 0.0,108.0 C14.2,101.7 49.8,85.0 75.0,75.0 C100.2,65.0 121.7,57.2 151.0,48.0 C180.3,38.8 217.5,27.5 251.0,20.0 C284.5,12.5 330.5,6.5 352.0,3.0 C373.5,-0.5 375.3,-0.3 380.0,-1.0 L-10,-12 Z" fill="rgba(190,235,100,0.07)"/>
<path d="M450,323 C458.9,322.5 482.4,322.2 503.7,320.0 C525.0,317.8 550.8,314.8 578.0,310.0 C605.2,305.2 650.0,295.1 667.0,291.4 C684.0,287.7 677.8,288.6 680.0,288.0 L680,381 L545,381 Z" fill="rgba(40,80,10,0.10)"/>
<path d="M-10,200 C-8.3,200.7 -9.1,200.3 0.0,204.0 C9.1,207.7 29.7,216.2 44.5,222.0 C59.3,227.8 74.2,233.2 89.0,239.0 C103.8,244.8 114.3,250.0 133.0,256.5 C151.7,263.0 172.8,269.9 201.0,278.0 C229.2,286.1 272.5,298.3 302.0,305.0 C331.5,311.7 353.3,315.0 378.0,318.0 C402.7,321.0 438.0,322.2 450.0,323.0 L450,323 C434.2,323.3 383.2,325.4 355.0,324.8 C326.8,324.2 303.6,322.4 280.7,319.3 C257.8,316.2 242.1,312.1 217.5,306.0 C192.9,299.9 154.4,288.8 133.0,283.0 C111.6,277.2 103.8,274.8 89.0,271.4 C74.2,268.0 59.3,266.1 44.5,262.5 C29.7,258.9 9.1,252.6 0.0,250.0 C-9.1,247.4 -8.3,247.5 -10.0,247.0 Z" fill="rgba(190,240,90,0.20)"/>
<rect width="667" height="375" fill="url(#gd9)"/>
<rect width="667" height="375" fill="url(#gt9)"/>
<path d="M30,-12 C30.8,-10.0 30.8,-8.7 35.0,0.0 C39.2,8.7 45.7,25.0 55.0,40.0 C64.3,55.0 75.0,70.0 91.0,90.0 C107.0,110.0 128.3,136.7 151.0,160.0 C173.7,183.3 201.8,210.0 227.0,230.0 C252.2,250.0 279.5,267.5 302.0,280.0 C324.5,292.5 352.0,300.8 362.0,305.0" stroke="rgba(55,95,15,0.5)" stroke-width="1.7" fill="none"/>
<path d="M362,305 C375.8,310.8 417.0,328.3 445.0,340.0 C473.0,351.7 513.3,368.2 530.0,375.0 C546.7,381.8 542.5,380.0 545.0,381.0" stroke="rgba(205,248,120,0.55)" stroke-width="2.04" fill="none"/>
<path d="M503.7,320 C516.1,318.3 550.8,314.8 578.0,310.0 C605.2,305.2 650.0,295.1 667.0,291.4 C684.0,287.7 677.8,288.6 680.0,288.0 L680,312 C677.8,312.2 677.0,312.0 667.0,313.0 C657.0,314.0 634.8,316.7 620.0,318.0 C605.2,319.3 591.3,320.5 578.0,321.0 C564.7,321.5 552.4,321.2 540.0,321.0 C527.6,320.8 509.8,320.2 503.7,320.0 Z" fill="rgba(40,70,10,0.14)"/>
<path d="M-10,113 C-8.3,112.2 -14.2,114.3 0.0,108.0 C14.2,101.7 49.8,85.0 75.0,75.0 C100.2,65.0 121.7,57.2 151.0,48.0 C180.3,38.8 217.5,27.5 251.0,20.0 C284.5,12.5 330.5,6.5 352.0,3.0 C373.5,-0.5 375.3,-0.3 380.0,-1.0 L384,-11 C379.3,-10.3 377.5,-10.5 356.0,-7.0 C334.5,-3.5 288.5,3.5 255.0,10.0 C221.5,16.5 184.3,23.8 155.0,32.0 C125.7,40.2 104.2,49.0 79.0,59.0 C53.8,69.0 18.2,85.7 4.0,92.0 C-10.2,98.3 -4.3,96.2 -6.0,97.0 Z" fill="rgba(205,245,110,0.10)"/>
<path d="M-10,113 C-8.3,112.2 -14.2,114.3 0.0,108.0 C14.2,101.7 49.8,85.0 75.0,75.0 C100.2,65.0 121.7,57.2 151.0,48.0 C180.3,38.8 217.5,27.5 251.0,20.0 C284.5,12.5 330.5,6.5 352.0,3.0 C373.5,-0.5 375.3,-0.3 380.0,-1.0" stroke="rgba(205,245,110,0.5)" stroke-width="2.21" fill="none"/>
<path d="M-10,247 C-8.3,247.5 -9.1,247.4 0.0,250.0 C9.1,252.6 29.7,258.9 44.5,262.5 C59.3,266.1 74.2,268.0 89.0,271.4 C103.8,274.8 111.6,277.2 133.0,283.0 C154.4,288.8 192.9,299.9 217.5,306.0 C242.1,312.1 257.8,316.2 280.7,319.3 C303.6,322.4 326.8,324.2 355.0,324.8 C383.2,325.4 434.2,323.3 450.0,323.0" stroke="rgba(200,245,110,0.22)" stroke-width="1.7" fill="none"/>
<path d="M-10,200 C-8.3,200.7 -9.1,200.3 0.0,204.0 C9.1,207.7 29.7,216.2 44.5,222.0 C59.3,227.8 74.2,233.2 89.0,239.0 C103.8,244.8 114.3,250.0 133.0,256.5 C151.7,263.0 172.8,269.9 201.0,278.0 C229.2,286.1 272.5,298.3 302.0,305.0 C331.5,311.7 353.3,315.0 378.0,318.0 C402.7,321.0 429.1,322.7 450.0,323.0 C470.9,323.3 482.4,322.2 503.7,320.0 C525.0,317.8 550.8,314.8 578.0,310.0 C605.2,305.2 650.0,295.1 667.0,291.4 C684.0,287.7 677.8,288.6 680.0,288.0" stroke="rgba(205,248,110,0.8)" stroke-width="2.38" fill="none"/>
</svg><svg style="position:absolute;left:0px;top:0px;width:160.8px;height:90.6px;overflow:visible;" viewBox="0 0 160.4 90.6"></svg></div>
<div style="position:absolute;left:286px;top:545.8px;width:160.8px;height:22.2px;overflow:hidden"><svg style="position:absolute;left:0px;top:0px;width:160.8px;height:91px" viewBox="0 0 667 375" preserveAspectRatio="none">
<defs><radialGradient id="gg10" cx="54%" cy="50%" r="85%">
<stop offset="0" stop-color="#95bf3c"/><stop offset="0.45" stop-color="#8cb638"/><stop offset="0.75" stop-color="#7aa530"/><stop offset="1" stop-color="#5d8a24"/></radialGradient>
<radialGradient id="gd10" cx="0%" cy="100%" r="34%"><stop offset="0" stop-color="rgba(30,70,5,0.5)"/><stop offset="1" stop-color="rgba(30,70,5,0)"/></radialGradient>
<radialGradient id="gt10" cx="100%" cy="0%" r="42%"><stop offset="0" stop-color="rgba(40,70,10,0.26)"/><stop offset="1" stop-color="rgba(40,70,10,0)"/></radialGradient>
</defs>
<rect width="667" height="375" fill="url(#gg10)"/>
<path d="M30,-12 C30.8,-10.0 30.8,-8.7 35.0,0.0 C39.2,8.7 45.7,25.0 55.0,40.0 C64.3,55.0 75.0,70.0 91.0,90.0 C107.0,110.0 128.3,136.7 151.0,160.0 C173.7,183.3 201.8,210.0 227.0,230.0 C252.2,250.0 279.5,267.5 302.0,280.0 C324.5,292.5 338.2,295.0 362.0,305.0 C385.8,315.0 417.0,328.3 445.0,340.0 C473.0,351.7 513.3,368.2 530.0,375.0 C546.7,381.8 542.5,380.0 545.0,381.0 L-10,381 L-10,-12 Z" fill="rgba(50,90,10,0.085)"/>
<path d="M-10,113 C-8.3,112.2 -14.2,114.3 0.0,108.0 C14.2,101.7 49.8,85.0 75.0,75.0 C100.2,65.0 121.7,57.2 151.0,48.0 C180.3,38.8 217.5,27.5 251.0,20.0 C284.5,12.5 330.5,6.5 352.0,3.0 C373.5,-0.5 375.3,-0.3 380.0,-1.0 L-10,-12 Z" fill="rgba(190,235,100,0.07)"/>
<path d="M450,323 C458.9,322.5 482.4,322.2 503.7,320.0 C525.0,317.8 550.8,314.8 578.0,310.0 C605.2,305.2 650.0,295.1 667.0,291.4 C684.0,287.7 677.8,288.6 680.0,288.0 L680,381 L545,381 Z" fill="rgba(40,80,10,0.10)"/>
<path d="M-10,200 C-8.3,200.7 -9.1,200.3 0.0,204.0 C9.1,207.7 29.7,216.2 44.5,222.0 C59.3,227.8 74.2,233.2 89.0,239.0 C103.8,244.8 114.3,250.0 133.0,256.5 C151.7,263.0 172.8,269.9 201.0,278.0 C229.2,286.1 272.5,298.3 302.0,305.0 C331.5,311.7 353.3,315.0 378.0,318.0 C402.7,321.0 438.0,322.2 450.0,323.0 L450,323 C434.2,323.3 383.2,325.4 355.0,324.8 C326.8,324.2 303.6,322.4 280.7,319.3 C257.8,316.2 242.1,312.1 217.5,306.0 C192.9,299.9 154.4,288.8 133.0,283.0 C111.6,277.2 103.8,274.8 89.0,271.4 C74.2,268.0 59.3,266.1 44.5,262.5 C29.7,258.9 9.1,252.6 0.0,250.0 C-9.1,247.4 -8.3,247.5 -10.0,247.0 Z" fill="rgba(190,240,90,0.20)"/>
<rect width="667" height="375" fill="url(#gd10)"/>
<rect width="667" height="375" fill="url(#gt10)"/>
<path d="M30,-12 C30.8,-10.0 30.8,-8.7 35.0,0.0 C39.2,8.7 45.7,25.0 55.0,40.0 C64.3,55.0 75.0,70.0 91.0,90.0 C107.0,110.0 128.3,136.7 151.0,160.0 C173.7,183.3 201.8,210.0 227.0,230.0 C252.2,250.0 279.5,267.5 302.0,280.0 C324.5,292.5 352.0,300.8 362.0,305.0" stroke="rgba(55,95,15,0.5)" stroke-width="1.7" fill="none"/>
<path d="M362,305 C375.8,310.8 417.0,328.3 445.0,340.0 C473.0,351.7 513.3,368.2 530.0,375.0 C546.7,381.8 542.5,380.0 545.0,381.0" stroke="rgba(205,248,120,0.55)" stroke-width="2.04" fill="none"/>
<path d="M503.7,320 C516.1,318.3 550.8,314.8 578.0,310.0 C605.2,305.2 650.0,295.1 667.0,291.4 C684.0,287.7 677.8,288.6 680.0,288.0 L680,312 C677.8,312.2 677.0,312.0 667.0,313.0 C657.0,314.0 634.8,316.7 620.0,318.0 C605.2,319.3 591.3,320.5 578.0,321.0 C564.7,321.5 552.4,321.2 540.0,321.0 C527.6,320.8 509.8,320.2 503.7,320.0 Z" fill="rgba(40,70,10,0.14)"/>
<path d="M-10,113 C-8.3,112.2 -14.2,114.3 0.0,108.0 C14.2,101.7 49.8,85.0 75.0,75.0 C100.2,65.0 121.7,57.2 151.0,48.0 C180.3,38.8 217.5,27.5 251.0,20.0 C284.5,12.5 330.5,6.5 352.0,3.0 C373.5,-0.5 375.3,-0.3 380.0,-1.0 L384,-11 C379.3,-10.3 377.5,-10.5 356.0,-7.0 C334.5,-3.5 288.5,3.5 255.0,10.0 C221.5,16.5 184.3,23.8 155.0,32.0 C125.7,40.2 104.2,49.0 79.0,59.0 C53.8,69.0 18.2,85.7 4.0,92.0 C-10.2,98.3 -4.3,96.2 -6.0,97.0 Z" fill="rgba(205,245,110,0.10)"/>
<path d="M-10,113 C-8.3,112.2 -14.2,114.3 0.0,108.0 C14.2,101.7 49.8,85.0 75.0,75.0 C100.2,65.0 121.7,57.2 151.0,48.0 C180.3,38.8 217.5,27.5 251.0,20.0 C284.5,12.5 330.5,6.5 352.0,3.0 C373.5,-0.5 375.3,-0.3 380.0,-1.0" stroke="rgba(205,245,110,0.5)" stroke-width="2.21" fill="none"/>
<path d="M-10,247 C-8.3,247.5 -9.1,247.4 0.0,250.0 C9.1,252.6 29.7,258.9 44.5,262.5 C59.3,266.1 74.2,268.0 89.0,271.4 C103.8,274.8 111.6,277.2 133.0,283.0 C154.4,288.8 192.9,299.9 217.5,306.0 C242.1,312.1 257.8,316.2 280.7,319.3 C303.6,322.4 326.8,324.2 355.0,324.8 C383.2,325.4 434.2,323.3 450.0,323.0" stroke="rgba(200,245,110,0.22)" stroke-width="1.7" fill="none"/>
<path d="M-10,200 C-8.3,200.7 -9.1,200.3 0.0,204.0 C9.1,207.7 29.7,216.2 44.5,222.0 C59.3,227.8 74.2,233.2 89.0,239.0 C103.8,244.8 114.3,250.0 133.0,256.5 C151.7,263.0 172.8,269.9 201.0,278.0 C229.2,286.1 272.5,298.3 302.0,305.0 C331.5,311.7 353.3,315.0 378.0,318.0 C402.7,321.0 429.1,322.7 450.0,323.0 C470.9,323.3 482.4,322.2 503.7,320.0 C525.0,317.8 550.8,314.8 578.0,310.0 C605.2,305.2 650.0,295.1 667.0,291.4 C684.0,287.7 677.8,288.6 680.0,288.0" stroke="rgba(205,248,110,0.8)" stroke-width="2.38" fill="none"/>
</svg><svg style="position:absolute;left:0px;top:0px;width:160.8px;height:90.6px;overflow:visible;" viewBox="0 0 160.4 90.6"><rect x="9.3" y="2.7" width="143.3" height="10.5" fill="none" stroke="rgba(255,255,255,0.9)" stroke-width="1.2"/><rect x="9.3" y="2.7" width="143.3" height="10.5" fill="none" stroke="#444" stroke-width="0.95" stroke-dasharray="2.3 2.1"/><rect x="9.3" y="15.4" width="52.7" height="20" fill="none" stroke="rgba(255,255,255,0.9)" stroke-width="1.2"/><rect x="9.3" y="15.4" width="52.7" height="20" fill="none" stroke="#444" stroke-width="0.95" stroke-dasharray="2.3 2.1"/><rect x="62" y="15.4" width="90.6" height="20" fill="none" stroke="rgba(255,255,255,0.9)" stroke-width="1.2"/><rect x="62" y="15.4" width="90.6" height="20" fill="none" stroke="#444" stroke-width="0.95" stroke-dasharray="2.3 2.1"/></svg></div>
<div class="t" style="left:115px;top:268px;width:160.4px;text-align:center;line-height:18px">Title Slide</div>
<div class="t" style="left:286px;top:268px;width:160.4px;text-align:center;line-height:18px">Title and Content</div>
<div class="t" style="left:115px;top:393px;width:160.4px;text-align:center;line-height:18px">Section Header</div>
<div class="t" style="left:286px;top:393px;width:160.4px;text-align:center;line-height:18px">Two Content</div>
<div class="t" style="left:115px;top:517.2px;width:160.4px;text-align:center;line-height:18px">Comparison</div>
<div class="t" style="left:286px;top:517.2px;width:160.4px;text-align:center;line-height:18px">Title Only</div>
<div style="position:absolute;left:454px;top:168.6px;width:10.4px;height:213.4px;background:#f3f3f3;border:1px solid #cfcfcf;border-radius:3px;box-sizing:border-box"></div>
<div style="position:absolute;left:457.4px;top:267.6px;width:4px;height:1px;background:#d0d0d0"></div>
<div style="position:absolute;left:457.4px;top:270.8px;width:4px;height:1px;background:#d0d0d0"></div>
<div style="position:absolute;left:457.4px;top:274.0px;width:4px;height:1px;background:#d0d0d0"></div>
<div style="position:absolute;left:457.4px;top:277.20000000000005px;width:4px;height:1px;background:#d0d0d0"></div>
<div style="position:absolute;left:457.4px;top:280.40000000000003px;width:4px;height:1px;background:#d0d0d0"></div>
<div style="position:absolute;left:457.4px;top:283.6px;width:4px;height:1px;background:#d0d0d0"></div>
<div style="position:absolute;left:104px;top:574px;width:368.4px;height:1px;background:#cfcfcf"></div>
<div class="t" style="left:131px;top:589px;line-height:18px">Folie duplizieren</div>
</body></html>
